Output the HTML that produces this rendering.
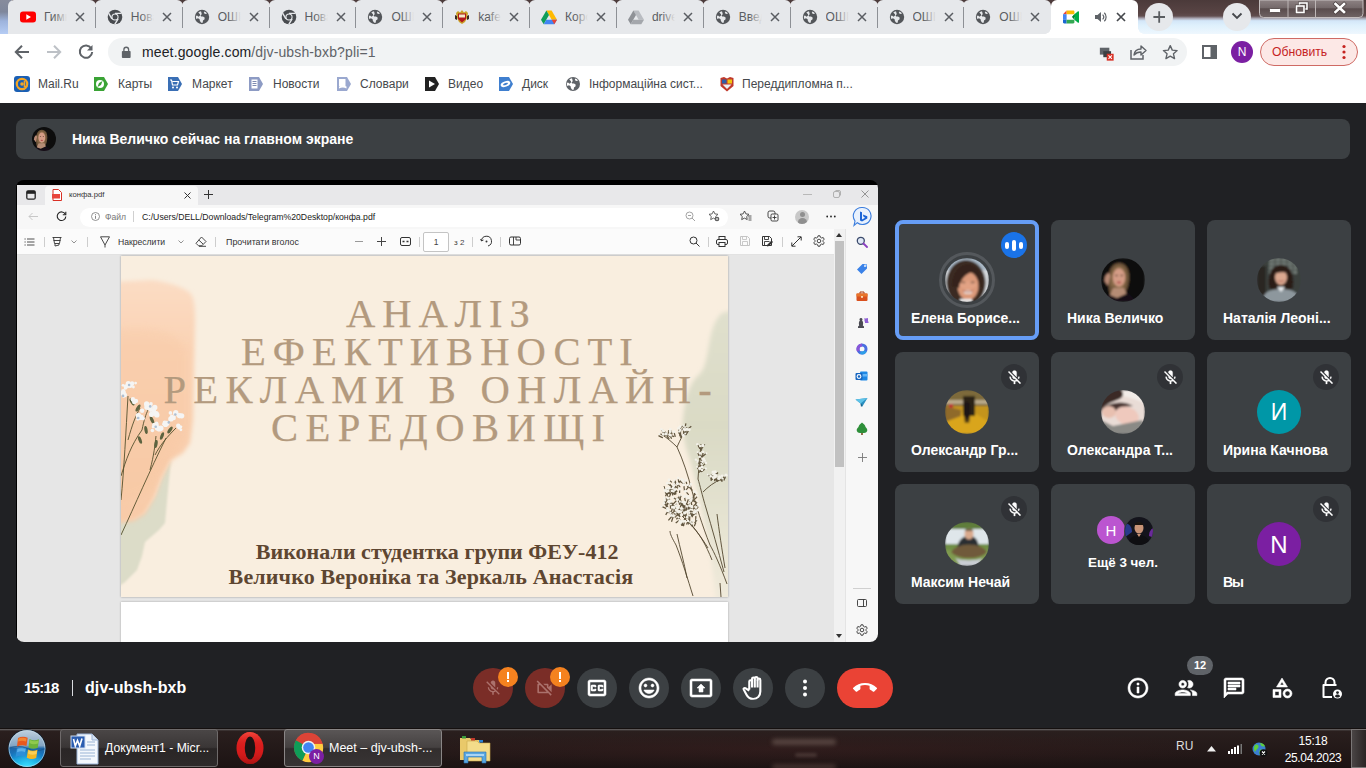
<!DOCTYPE html>
<html><head><meta charset="utf-8">
<style>
*{box-sizing:border-box;margin:0;padding:0}
html,body{width:1366px;height:768px;overflow:hidden;background:#202124;font-family:"Liberation Sans",sans-serif}
.abs,#root div,#root svg,#root span.a{position:absolute}
#root{position:relative;width:1366px;height:768px;overflow:hidden;background:#202124}
/* ---------- chrome tab strip ---------- */
#tabstrip{left:0;top:0;width:1366px;height:34px;background:linear-gradient(180deg,#4b3a3a 0,#584444 38%,#604d4e 47%,#a9a7b3 54%,#d3e6f8 61%,#def0fc 74%,#eef7fe 100%)}
#tabstrip .leftglass{left:0;top:0;width:12px;height:34px;background:linear-gradient(180deg,#878c9c 0,#7f879b 35%,#9db3dc 62%,#b5ccf4 100%)}
.tab{top:0;height:34px;width:88px;background:#e6e8eb;border-radius:6px 6px 0 0}
.tab .sep{left:87px;top:9px;width:1px;height:18px;background:#8d9095}
.tab .fav{left:12px;top:9px;width:16px;height:16px}
.tab .tt{left:36px;top:9px;width:23px;height:16px;overflow:hidden;white-space:nowrap;font-size:12px;line-height:16px;color:#5a5d62}
.tab .tt:after{content:"";position:absolute;right:0;top:0;width:13px;height:16px;background:linear-gradient(90deg,rgba(230,232,235,0),#e6e8eb)}
.tab .x{left:66px;top:11px;width:12px;height:12px}
#toolbar{left:0;top:34px;width:1366px;height:36px;background:#fff}
#omni{left:108px;top:38px;width:1079px;height:28px;border-radius:14px;background:#f1f3f4}
#bm{left:0;top:70px;width:1366px;height:33px;background:#fff}
.bmi{top:76px;width:16px;height:16px}
.bmt{top:76px;font-size:12px;line-height:16px;color:#45484c;white-space:nowrap}
/* ---------- meet ---------- */
#banner{left:16px;top:119px;width:1334px;height:40px;border-radius:8px;background:#3c4043}
#banner .t{left:56px;top:10px;font-size:14px;font-weight:bold;color:#fff;line-height:20px;white-space:nowrap}
.tile{width:144px;height:120px;border-radius:8px;background:#3c4043}
.tile .nm{left:16px;top:88px;font-size:14px;line-height:20px;font-weight:bold;color:#fff;white-space:nowrap}
.tile .av{left:50px;top:38px;width:44px;height:44px;border-radius:50%;overflow:hidden}
.tile .mic{left:106px;top:12px;width:26px;height:26px;border-radius:50%;background:#303236}
.cb{top:668px;width:40px;height:40px;border-radius:50%;background:#3c4043}
.tl{font-family:"Liberation Serif",serif;font-size:40.600px;line-height:46px;color:#b39a7e;white-space:nowrap;-webkit-text-stroke:.25px #b39a7e}
.st{font-family:"Liberation Serif",serif;font-weight:bold;font-size:22px;line-height:26px;color:#5e4631;white-space:nowrap}
/* ---------- taskbar ---------- */
#taskbar{left:0;top:728px;width:1366px;height:40px;background:#1d1413}
</style></head>
<body><div id="root">
<!-- TABSTRIP -->
<div id="tabstrip"><div class="leftglass"></div></div>
<div class="tab" style="left:8.0px"><svg class="fav" viewBox="0 0 16 16"><rect x="0" y="2.5" width="16" height="11" rx="3" fill="#f00"/><path d="M6.3 5.3v5.4L11 8z" fill="#fff"/></svg><div class="tt">Гимн</div><svg class="x" viewBox="0 0 12 12"><path d="M2 2l8 8M10 2l-8 8" stroke="#5a5d62" stroke-width="1.500" fill="none"/></svg></div>
<div class="tab" style="left:94.8px"><svg class="fav" viewBox="0 0 16 16"><circle cx="8" cy="8" r="7.300" fill="#484b4f"/><circle cx="8" cy="8" r="3.600" fill="#e6e8eb"/><circle cx="8" cy="8" r="2.500" fill="#484b4f"/><path d="M8 4.400h6.500M4.900 9.800L1.600 4.200M11.100 9.800L7.800 15.400" stroke="#e6e8eb" stroke-width="1.400" fill="none"/></svg><div class="tt">Нова</div><svg class="x" viewBox="0 0 12 12"><path d="M2 2l8 8M10 2l-8 8" stroke="#5a5d62" stroke-width="1.500" fill="none"/></svg></div>
<div class="tab" style="left:181.7px"><svg class="fav" viewBox="0 0 16 16"><circle cx="8" cy="8" r="7.200" fill="#53565a"/><path d="M7 2.2c-1 .2-2 .7-2.7 1.4L6 5.2v1.3L4.6 7.8 3 6.5 1.9 7c-.1 1 0 2 .4 2.9L4 9.2l1.6 1 .3 1.8 1.3 1.8c.5 0 1 0 1.500-.1L9 11.600l1.600-1.400V8.600L9 7.500H7.200L6.500 6.300l1.300-1zM10.300 2.600l-.5 1.300 1.400 1.100 1.900-.4c-.7-.9-1.700-1.600-2.800-2z" fill="#e6e8eb"/></svg><div class="tt">ОШІБ</div><svg class="x" viewBox="0 0 12 12"><path d="M2 2l8 8M10 2l-8 8" stroke="#5a5d62" stroke-width="1.500" fill="none"/></svg></div>
<div class="tab" style="left:268.5px"><svg class="fav" viewBox="0 0 16 16"><circle cx="8" cy="8" r="7.300" fill="#484b4f"/><circle cx="8" cy="8" r="3.600" fill="#e6e8eb"/><circle cx="8" cy="8" r="2.500" fill="#484b4f"/><path d="M8 4.400h6.500M4.900 9.800L1.600 4.200M11.100 9.800L7.800 15.400" stroke="#e6e8eb" stroke-width="1.400" fill="none"/></svg><div class="tt">Нова</div><svg class="x" viewBox="0 0 12 12"><path d="M2 2l8 8M10 2l-8 8" stroke="#5a5d62" stroke-width="1.500" fill="none"/></svg></div>
<div class="tab" style="left:355.4px"><svg class="fav" viewBox="0 0 16 16"><circle cx="8" cy="8" r="7.200" fill="#53565a"/><path d="M7 2.2c-1 .2-2 .7-2.7 1.4L6 5.2v1.3L4.6 7.8 3 6.5 1.9 7c-.1 1 0 2 .4 2.9L4 9.2l1.6 1 .3 1.8 1.3 1.8c.5 0 1 0 1.500-.1L9 11.600l1.600-1.400V8.600L9 7.500H7.200L6.500 6.300l1.300-1zM10.300 2.600l-.5 1.300 1.400 1.100 1.900-.4c-.7-.9-1.700-1.600-2.800-2z" fill="#e6e8eb"/></svg><div class="tt">ОШІБ</div><svg class="x" viewBox="0 0 12 12"><path d="M2 2l8 8M10 2l-8 8" stroke="#5a5d62" stroke-width="1.500" fill="none"/></svg></div>
<div class="tab" style="left:442.2px"><svg class="fav" viewBox="0 0 16 16"><path d="M2 4l2-2 2 1.500L8 1l2 2.500L12 2l2 2-1 5-2 4-3 2-3-2-2-4z" fill="#c9a227"/><path d="M4 4.500h8v5.500L8 13.500 4 10z" fill="#b3171d"/><path d="M5 5.500h6v3H5z" fill="#f3e9c6"/><path d="M1 6l2 1v4l-2-1zM15 6l-2 1v4l2-1z" fill="#3a2a20"/></svg><div class="tt">kafed</div><svg class="x" viewBox="0 0 12 12"><path d="M2 2l8 8M10 2l-8 8" stroke="#5a5d62" stroke-width="1.500" fill="none"/></svg></div>
<div class="tab" style="left:529.1px"><svg class="fav" viewBox="0 0 16 16"><path d="M5.400 1.500h5.200L16 10.800h-5.300z" fill="#ffba00"/><path d="M5.400 1.500L0 10.800l2.700 4.500L8 6z" fill="#0f9d58"/><path d="M5.300 10.800L2.700 15.300h10.600l2.700-4.500z" fill="#4285f4"/><path d="M8 6l2.700 4.800H5.300z" fill="#188038" opacity=".0"/><path d="M10.700 10.800L13.300 15.300 16 10.800z" fill="#ea4335"/></svg><div class="tt">Коро</div><svg class="x" viewBox="0 0 12 12"><path d="M2 2l8 8M10 2l-8 8" stroke="#5a5d62" stroke-width="1.500" fill="none"/></svg></div>
<div class="tab" style="left:615.9px"><svg class="fav" viewBox="0 0 16 16"><path d="M5.400 1.500h5.200L16 10.800h-5.300z" fill="#b9bcc1"/><path d="M5.400 1.500L0 10.800l2.700 4.500L8 6z" fill="#8f9297"/><path d="M5.300 10.800L2.700 15.300h10.600l2.700-4.500z" fill="#a4a7ac"/></svg><div class="tt">drive</div><svg class="x" viewBox="0 0 12 12"><path d="M2 2l8 8M10 2l-8 8" stroke="#5a5d62" stroke-width="1.500" fill="none"/></svg></div>
<div class="tab" style="left:702.8px"><svg class="fav" viewBox="0 0 16 16"><circle cx="8" cy="8" r="7.200" fill="#53565a"/><path d="M7 2.2c-1 .2-2 .7-2.7 1.4L6 5.2v1.3L4.6 7.8 3 6.5 1.9 7c-.1 1 0 2 .4 2.9L4 9.2l1.6 1 .3 1.8 1.3 1.8c.5 0 1 0 1.500-.1L9 11.600l1.600-1.400V8.600L9 7.500H7.200L6.500 6.300l1.300-1zM10.300 2.600l-.5 1.300 1.400 1.100 1.900-.4c-.7-.9-1.700-1.600-2.800-2z" fill="#e6e8eb"/></svg><div class="tt">Введ</div><svg class="x" viewBox="0 0 12 12"><path d="M2 2l8 8M10 2l-8 8" stroke="#5a5d62" stroke-width="1.500" fill="none"/></svg></div>
<div class="tab" style="left:789.6px"><svg class="fav" viewBox="0 0 16 16"><circle cx="8" cy="8" r="7.200" fill="#53565a"/><path d="M7 2.2c-1 .2-2 .7-2.7 1.4L6 5.2v1.3L4.6 7.8 3 6.5 1.9 7c-.1 1 0 2 .4 2.9L4 9.2l1.6 1 .3 1.8 1.3 1.8c.5 0 1 0 1.500-.1L9 11.600l1.600-1.400V8.600L9 7.500H7.200L6.500 6.300l1.300-1zM10.300 2.600l-.5 1.300 1.400 1.100 1.900-.4c-.7-.9-1.700-1.600-2.800-2z" fill="#e6e8eb"/></svg><div class="tt">ОШІБ</div><svg class="x" viewBox="0 0 12 12"><path d="M2 2l8 8M10 2l-8 8" stroke="#5a5d62" stroke-width="1.500" fill="none"/></svg></div>
<div class="tab" style="left:876.5px"><svg class="fav" viewBox="0 0 16 16"><circle cx="8" cy="8" r="7.200" fill="#53565a"/><path d="M7 2.2c-1 .2-2 .7-2.7 1.4L6 5.2v1.3L4.6 7.8 3 6.5 1.9 7c-.1 1 0 2 .4 2.9L4 9.2l1.6 1 .3 1.8 1.3 1.8c.5 0 1 0 1.500-.1L9 11.600l1.600-1.400V8.600L9 7.500H7.200L6.500 6.300l1.300-1zM10.300 2.600l-.5 1.300 1.400 1.100 1.900-.4c-.7-.9-1.700-1.600-2.800-2z" fill="#e6e8eb"/></svg><div class="tt">ОШІБ</div><svg class="x" viewBox="0 0 12 12"><path d="M2 2l8 8M10 2l-8 8" stroke="#5a5d62" stroke-width="1.500" fill="none"/></svg></div>
<div class="tab" style="left:963.3px"><svg class="fav" viewBox="0 0 16 16"><circle cx="8" cy="8" r="7.200" fill="#53565a"/><path d="M7 2.2c-1 .2-2 .7-2.7 1.4L6 5.2v1.3L4.6 7.8 3 6.5 1.9 7c-.1 1 0 2 .4 2.9L4 9.2l1.6 1 .3 1.8 1.3 1.8c.5 0 1 0 1.500-.1L9 11.600l1.600-1.400V8.600L9 7.500H7.200L6.500 6.300l1.300-1zM10.300 2.600l-.5 1.300 1.400 1.100 1.900-.4c-.7-.9-1.700-1.600-2.800-2z" fill="#e6e8eb"/></svg><div class="tt">ОШІБ</div><svg class="x" viewBox="0 0 12 12"><path d="M2 2l8 8M10 2l-8 8" stroke="#5a5d62" stroke-width="1.500" fill="none"/></svg></div>
<div style="left:94.8px;top:7px;width:1px;height:21px;background:#8d9095"></div>
<div style="left:181.7px;top:7px;width:1px;height:21px;background:#8d9095"></div>
<div style="left:268.5px;top:7px;width:1px;height:21px;background:#8d9095"></div>
<div style="left:355.4px;top:7px;width:1px;height:21px;background:#8d9095"></div>
<div style="left:442.2px;top:7px;width:1px;height:21px;background:#8d9095"></div>
<div style="left:529.1px;top:7px;width:1px;height:21px;background:#8d9095"></div>
<div style="left:615.9px;top:7px;width:1px;height:21px;background:#8d9095"></div>
<div style="left:702.8px;top:7px;width:1px;height:21px;background:#8d9095"></div>
<div style="left:789.6px;top:7px;width:1px;height:21px;background:#8d9095"></div>
<div style="left:876.5px;top:7px;width:1px;height:21px;background:#8d9095"></div>
<div style="left:963.3px;top:7px;width:1px;height:21px;background:#8d9095"></div>
<div class="tab" style="left:1050.500px;background:#fff;width:87px"><svg class="fav" viewBox="0 0 16 16"><path d="M0 5.200L3.600 1.600V5.200z" fill="#ea4335"/><path d="M3.600 1.600h6.600c.7 0 1.200.5 1.200 1.200v2.400H3.600z" fill="#fbbc04"/><path d="M0 5.200h3.600v5.600H0z" fill="#4285f4"/><path d="M0 10.800h3.600v3.600H1.200c-.7 0-1.200-.5-1.200-1.200z" fill="#1967d2"/><path d="M3.600 10.800h7.800v2.400c0 .7-.5 1.200-1.200 1.200H3.600z" fill="#34a853"/><path d="M11.400 5.200L15 2.300c.4-.3 1-.1 1 .5v10.400c0 .6-.6.800-1 .5l-3.600-2.900V8l-2.200 0 0 0z" fill="#00ac47"/><path d="M11.400 5.200v5.600L9 8z" fill="#00832d"/></svg><svg style="left:43px;top:10px;width:14px;height:14px" viewBox="0 0 14 14"><path d="M1 5h2.500L7 2v10L3.500 9H1z" fill="#5f6368"/><path d="M8.600 4.600a3.400 3.400 0 0 1 0 4.800M10.300 2.800a5.800 5.800 0 0 1 0 8.400" stroke="#5f6368" stroke-width="1.200" fill="none"/></svg><svg class="x" style="left:64px" viewBox="0 0 12 12"><path d="M2 2l8 8M10 2l-8 8" stroke="#45484c" stroke-width="1.700" fill="none"/></svg></div>
<div style="left:1045px;top:28px;width:6px;height:6px;background:radial-gradient(circle at 0 0,rgba(255,255,255,0) 5.500px,#fff 6px)"></div><div style="left:1138px;top:28px;width:6px;height:6px;background:radial-gradient(circle at 100% 0,rgba(255,255,255,0) 5.500px,#fff 6px)"></div>
<div style="left:1145px;top:3px;width:28px;height:28px;border-radius:50%;background:#e6e8eb"></div>
<svg style="left:1151px;top:9px;width:16px;height:16px" viewBox="0 0 16 16"><path d="M8.200 2.200v11.600M2.400 8h11.600" stroke="#5a5d61" stroke-width="1.800" fill="none"/></svg>
<div style="left:1223px;top:3px;width:28px;height:28px;border-radius:50%;background:#e6e8eb"></div>
<svg style="left:1231px;top:12px;width:12px;height:8px" viewBox="0 0 12 8"><path d="M1.500 1.500L6 6l4.500-4.500" stroke="#45484c" stroke-width="1.800" fill="none"/></svg>
<svg id="wc" style="left:1259px;top:0;width:105px;height:19px" viewBox="0 0 105 19">
<defs><linearGradient id="wg" x1="0" y1="0" x2="0" y2="1"><stop offset="0" stop-color="#8d8283"/><stop offset=".45" stop-color="#74696a"/><stop offset=".5" stop-color="#594c4d"/><stop offset="1" stop-color="#6f6364"/></linearGradient></defs>
<path d="M.5 0V13.500a4 4 0 0 0 4 4H100a4 4 0 0 0 4-4V0z" fill="url(#wg)" stroke="#c4bebe" stroke-width="1"/>
<path d="M29 0v17.500M56.500 0v17.500" stroke="#bdb6b6" stroke-width="1"/>
<rect x="10.500" y="8.500" width="11" height="4" rx=".8" fill="#fff" stroke="#4a4040" stroke-width=".8"/>
<rect x="40.500" y="3" width="7.500" height="6" fill="none" stroke="#4a4040" stroke-width="2.800"/><rect x="40.500" y="3" width="7.500" height="6" fill="none" stroke="#fff" stroke-width="1.600"/>
<rect x="37.500" y="6" width="7.500" height="6.500" fill="#6b5f60" stroke="#4a4040" stroke-width="2.800"/><rect x="37.500" y="6" width="7.500" height="6.500" fill="#6b5f60" stroke="#fff" stroke-width="1.600"/>
<path d="M76.500 4l8.500 8M85 4l-8.500 8" stroke="#4a4040" stroke-width="4" stroke-linecap="square"/><path d="M76.500 4l8.500 8M85 4l-8.500 8" stroke="#fff" stroke-width="2.600" stroke-linecap="square"/>
</svg>

<!-- TOOLBAR -->
<div id="toolbar"></div>
<svg style="left:13px;top:43px;width:18px;height:18px" viewBox="0 0 18 18"><path d="M16 9H3.500M9 2.800L2.800 9 9 15.200" stroke="#5f6368" stroke-width="2" fill="none"/></svg>
<svg style="left:45px;top:43px;width:18px;height:18px" viewBox="0 0 18 18"><path d="M2 9h12.500M9 2.800L15.200 9 9 15.200" stroke="#bdc1c6" stroke-width="2" fill="none"/></svg>
<svg style="left:77px;top:43px;width:18px;height:18px" viewBox="0 0 18 18"><path d="M14.200 5.200A6.200 6.200 0 1 0 15.200 9" stroke="#5f6368" stroke-width="2" fill="none"/><path d="M15.500 2v5.500H10z" fill="#5f6368"/></svg>
<div id="omni"></div>
<svg style="left:121px;top:45.500px;width:10.500px;height:12.500px" viewBox="0 0 12 14"><rect x="1" y="5.500" width="10" height="8" rx="1" fill="#5f6368"/><path d="M3.300 6V4a2.700 2.700 0 0 1 5.400 0v2" stroke="#5f6368" stroke-width="1.500" fill="none"/></svg>
<div style="left:142px;top:43px;font-size:14px;line-height:18px;color:#202124;white-space:nowrap;letter-spacing:.13px">meet.google.com<span style="color:#5f6368">/djv-ubsh-bxb?pli=1</span></div>
<!-- right icons in omnibox -->
<svg style="left:1099px;top:45.500px;width:15.500px;height:15.500px" viewBox="0 0 18 18"><rect x="1" y="2" width="11" height="8" fill="#5f6368"/><rect x="5" y="6" width="9" height="7" fill="#3c4043"/><rect x="9" y="9" width="8" height="8" fill="#d93025"/><path d="M11 11l4 4M15 11l-4 4" stroke="#fff" stroke-width="1.200"/></svg>
<svg style="left:1129px;top:43px;width:18px;height:18px" viewBox="0 0 18 18"><path d="M2 7v9h12v-4" stroke="#5f6368" stroke-width="1.500" fill="none"/><path d="M5 12c.500-4 3-6 7-6V3l5 4.500-5 4.500V9c-3 0-5 .800-7 3z" stroke="#5f6368" stroke-width="1.400" fill="none" stroke-linejoin="round"/></svg>
<svg style="left:1162px;top:44px;width:16.500px;height:16.500px" viewBox="0 0 18 18"><path d="M9 1.800l2.200 4.900 5.300.5-4 3.500 1.200 5.200L9 13.200l-4.700 2.700 1.200-5.200-4-3.500 5.300-.5z" stroke="#5f6368" stroke-width="1.500" fill="none" stroke-linejoin="round"/></svg>
<svg style="left:1202px;top:45px;width:15px;height:14px" viewBox="0 0 15 14"><rect x="1" y="1" width="13" height="12" stroke="#5f6368" stroke-width="2" fill="none"/><rect x="8.500" y="1" width="5.500" height="12" fill="#5f6368"/></svg>
<div style="left:1231px;top:41px;width:22px;height:22px;border-radius:50%;background:#7b1fa2;color:#fff;font-size:12px;line-height:22px;text-align:center">N</div>
<div style="left:1260px;top:38px;width:98px;height:28px;border-radius:14px;border:1px solid #cf6a64;background:#fce8e6"></div>
<div style="left:1272px;top:44px;font-size:12.2px;line-height:16px;color:#c5221f;white-space:nowrap;letter-spacing:0">Обновить</div>
<svg style="left:1341px;top:44px;width:6px;height:16px" viewBox="0 0 6 16"><circle cx="3" cy="2.500" r="1.600" fill="#c5221f"/><circle cx="3" cy="8" r="1.600" fill="#c5221f"/><circle cx="3" cy="13.500" r="1.600" fill="#c5221f"/></svg>

<!-- BOOKMARKS -->
<div id="bm"></div>
<svg class="bmi" style="left:14px" viewBox="0 0 16 16"><rect width="16" height="16" rx="3" fill="#1a5fb4"/><circle cx="8" cy="8" r="5.200" fill="none" stroke="#f5a623" stroke-width="2.200"/><circle cx="8" cy="8" r="1.800" fill="#f5a623"/><path d="M10.500 5v5.500h3" stroke="#f5a623" stroke-width="1.600" fill="none"/></svg>
<div class="bmt" style="left:38px">Mail.Ru</div>
<svg class="bmi" style="left:93px" viewBox="0 0 16 16"><path d="M1 1h10l4 7-4 7H1z" fill="#3aa335"/><circle cx="7" cy="8" r="4" fill="#fff"/><path d="M9.500 5L8 9 4.500 11 6 7z" fill="#3aa335"/></svg>
<div class="bmt" style="left:118px">Карты</div>
<svg class="bmi" style="left:167px" viewBox="0 0 16 16"><path d="M1 1h10l4 7-4 7H1z" fill="#3a6fb5"/><path d="M3 4h1.500l1 5h5l1-3.500H5.500" stroke="#fff" stroke-width="1.200" fill="none"/><circle cx="6" cy="11.500" r="1" fill="#fff"/><circle cx="10" cy="11.500" r="1" fill="#fff"/></svg>
<div class="bmt" style="left:192px">Маркет</div>
<svg class="bmi" style="left:248px" viewBox="0 0 16 16"><path d="M1 1h10l4 7-4 7H1z" fill="#8d9bc4"/><path d="M3.500 3.500h6v9h-6z" fill="#fff"/><path d="M4.500 5.500h4M4.500 7.500h4M4.500 9.500h4" stroke="#6f7ea8" stroke-width=".9"/></svg>
<div class="bmt" style="left:273px">Новости</div>
<svg class="bmi" style="left:336px" viewBox="0 0 16 16"><path d="M1 1h10l4 7-4 7H1z" fill="#9aa8cf"/><path d="M3 3h6.500v7H3z" fill="#fff"/><path d="M3 10.500c2.500-1.300 5-1.300 7.500 0v2c-2.500-1.300-5-1.300-7.500 0z" fill="#fff"/></svg>
<div class="bmt" style="left:360px">Словари</div>
<svg class="bmi" style="left:424px" viewBox="0 0 16 16"><path d="M1 1h10l4 7-4 7H1z" fill="#222"/><path d="M5 4.500v7L11 8z" fill="#fff"/></svg>
<div class="bmt" style="left:448px">Видео</div>
<svg class="bmi" style="left:498px" viewBox="0 0 16 16"><path d="M1 1h10l4 7-4 7H1z" fill="#3f7fcf"/><ellipse cx="7.500" cy="8" rx="5" ry="2.600" fill="#fff" transform="rotate(-20 7.500 8)"/><ellipse cx="7.500" cy="8" rx="2.600" ry="1" fill="#3f7fcf" transform="rotate(-20 7.500 8)"/></svg>
<div class="bmt" style="left:522px">Диск</div>
<svg class="bmi" style="left:565px" viewBox="0 0 16 16"><circle cx="8" cy="8" r="7" fill="#5f6368"/><path d="M7 2.200c-1 .2-2 .7-2.700 1.400L6 5.200v1.300L4.600 7.800 3 6.500 1.900 7c-.1 1 0 2 .4 2.900L4 9.200l1.600 1 .3 1.800 1.300 1.800c.5 0 1 0 1.500-.1L9 11.600l1.600-1.400V8.600L9 7.500H7.200L6.500 6.300l1.300-1zM10.300 2.600l-.5 1.300 1.400 1.100 1.900-.4c-.7-.9-1.700-1.600-2.800-2z" fill="#fff"/></svg>
<div class="bmt" style="left:589px">Інформаційна сист...</div>
<svg class="bmi" style="left:719px" viewBox="0 0 16 16"><path d="M1.500 2L5 1l3 1.500L11 1l3.500 1v8L8 15.500 1.500 10z" fill="#c0392b"/><path d="M3 3.500h4.500v4H3z" fill="#2e5fa8"/><path d="M8.500 3.500H13v4H8.500z" fill="#f1c40f"/><path d="M3.500 8.500h9L8 13z" fill="#ecf0f1"/></svg>
<div class="bmt" style="left:742px">Переддипломна п...</div>

<!-- MEET -->
<div id="banner"><div class="t">Ника Величко сейчас на главном экране</div>
<svg style="left:16px;top:8px;width:24px;height:24px;border-radius:50%" viewBox="0 0 44 44"><g filter="url(#avb)"><rect width="44" height="44" fill="#0b0a0c"/><path d="M8 32C5 16 10 5 18 5c7 0 11 7 10 17-1 7-2 10-5 14H9z" fill="#6e553a"/><path d="M10 28C9 16 12 8 18 8c5 0 8 6 7 14-1 5-2 8-4 10z" fill="#8a6a48"/><ellipse cx="18" cy="19.500" rx="6.200" ry="9.200" fill="#d49c86"/><path d="M3.500 23c0-5 2.500-8 4.500-8l1.500 3-2.500 10z" fill="#b98a74"/><ellipse cx="15.500" cy="17.500" rx="1.300" ry=".7" fill="#4a3428"/><ellipse cx="20.800" cy="17.500" rx="1.300" ry=".7" fill="#4a3428"/><path d="M12 30h11l6 14H6z" fill="#b58c74"/><path d="M6 36l10 4 11-5 10 9H0z" fill="#121016"/><ellipse cx="18" cy="24.500" rx="2.300" ry="1.100" fill="#b04a48"/></g></svg>
</div>
<div id="pres" style="left:16px;top:180px;width:862px;height:462px;border-radius:8px;background:#000;overflow:hidden">
<div id="pi" style="left:-16px;top:-180px;width:1366px;height:768px">
<!-- edge tab bar -->
<div style="left:17px;top:185px;width:861px;height:20px;background:#e8e8ea"></div>
<div style="left:45px;top:186px;width:153px;height:19px;background:#f7f7f7;border-radius:4px 4px 0 0"></div>
<svg style="left:26px;top:190px;width:10px;height:10px" viewBox="0 0 10 10"><rect x=".8" y=".8" width="8.400" height="8.400" rx="1.500" fill="none" stroke="#222" stroke-width="1.300"/><rect x=".8" y=".8" width="8.400" height="3" fill="#222"/></svg>
<svg style="left:52px;top:189px;width:10px;height:12px" viewBox="0 0 10 12"><path d="M1 .5h5.500L9.500 3.500v8H1z" fill="#fff" stroke="#d93025" stroke-width="1"/><rect x="0" y="5" width="8" height="4.500" fill="#e8453c"/></svg>
<div style="left:69px;top:189px;font-size:7.700px;line-height:11px;color:#333;white-space:nowrap">конфа.pdf</div>
<svg style="left:184px;top:192px;width:7px;height:7px" viewBox="0 0 7 7"><path d="M.5.5l6 6M6.500.5l-6 6" stroke="#333" stroke-width="1"/></svg>
<svg style="left:204px;top:190px;width:9px;height:9px" viewBox="0 0 9 9"><path d="M4.500 0v9M0 4.500h9" stroke="#333" stroke-width="1"/></svg>
<!-- window buttons -->
<div style="left:803px;top:194px;width:9px;height:1px;background:#b8b8b8"></div>
<svg style="left:833px;top:190px;width:8px;height:8px" viewBox="0 0 8 8"><rect x=".5" y="1.500" width="6" height="6" rx="1.500" fill="none" stroke="#aaa" stroke-width=".9"/><path d="M2.500.5H6a1.500 1.500 0 0 1 1.500 1.500V5.500" fill="none" stroke="#aaa" stroke-width=".9"/></svg>
<svg style="left:861px;top:190px;width:8px;height:8px" viewBox="0 0 8 8"><path d="M.5.5l7 7M7.500.5l-7 7" stroke="#8a8a8a" stroke-width=".9"/></svg>
<!-- address row -->
<div style="left:17px;top:205px;width:861px;height:24px;background:#f7f7f7"></div>
<div style="left:80px;top:207.500px;width:648px;height:19px;border-radius:9.500px;background:#fff"></div>
<svg style="left:28px;top:212px;width:10px;height:9px" viewBox="0 0 10 9"><path d="M10 4.500H1M4.500 1L1 4.500 4.500 8" stroke="#c8c8c8" stroke-width="1" fill="none"/></svg>
<svg style="left:56px;top:211px;width:11px;height:11px" viewBox="0 0 11 11"><path d="M9.300 3.200A4.300 4.300 0 1 0 9.800 5.500" stroke="#222" stroke-width="1.100" fill="none"/><path d="M9.800.8v3H6.800" stroke="#222" stroke-width="1.100" fill="none"/></svg>
<svg style="left:91px;top:212px;width:9px;height:9px" viewBox="0 0 9 9"><circle cx="4.500" cy="4.500" r="4" fill="none" stroke="#777" stroke-width=".8"/><path d="M4.500 3.800v3M4.500 2.200v.9" stroke="#777" stroke-width=".9"/></svg>
<div style="left:105px;top:212px;font-size:8.600px;line-height:11px;color:#777;white-space:nowrap">Файл</div>
<div style="left:133px;top:211px;width:1px;height:11px;background:#d0d0d0"></div>
<div style="left:142px;top:212px;font-size:8.700px;line-height:11px;color:#1a1a1a;white-space:nowrap">C:/Users/DELL/Downloads/Telegram%20Desktop/конфа.pdf</div>
<!-- address row right icons -->
<svg style="left:685px;top:211px;width:11px;height:11px" viewBox="0 0 11 11"><circle cx="4.500" cy="4.500" r="3.500" fill="none" stroke="#999" stroke-width=".9"/><path d="M7 7l3 3M3 4.500h3" stroke="#999" stroke-width=".9"/></svg>
<svg style="left:708px;top:210px;width:12px;height:12px" viewBox="0 0 12 12"><path d="M5.500 1l1.400 2.900 3.100.4-2.300 2.200.5 3.100-2.700-1.500-2.800 1.500.6-3.100L1 4.300l3.100-.4z" fill="none" stroke="#555" stroke-width=".9" stroke-linejoin="round"/><circle cx="9" cy="9" r="2.300" fill="#555"/><path d="M9 7.800v2.400M7.800 9h2.400" stroke="#fff" stroke-width=".7"/></svg>
<svg style="left:739px;top:210px;width:13px;height:12px" viewBox="0 0 13 12"><path d="M5.500 1l1.400 2.900 3.100.4-2.300 2.200.5 3.100-2.700-1.500-2.800 1.500.6-3.100L1 4.300l3.100-.4z" fill="none" stroke="#444" stroke-width=".9" stroke-linejoin="round"/><path d="M9 6h3.500M9.500 8h3M9.500 10h3" stroke="#444" stroke-width=".9"/></svg>
<svg style="left:767px;top:210px;width:12px;height:12px" viewBox="0 0 12 12"><rect x="1" y="1" width="7" height="7" rx="1.800" fill="none" stroke="#333" stroke-width=".9"/><rect x="4" y="4" width="7" height="7" rx="1.200" fill="#f7f7f7" stroke="#333" stroke-width=".9"/><path d="M7.500 5.500v4M5.500 7.500h4" stroke="#333" stroke-width=".9"/></svg>
<div style="left:795px;top:209.500px;width:14px;height:14px;border-radius:50%;background:#c8c8c8;overflow:hidden"><div style="left:4.500px;top:2.500px;width:5px;height:5px;border-radius:50%;background:#8f8f8f"></div><div style="left:2.500px;top:8.500px;width:9px;height:8px;border-radius:50%;background:#8f8f8f"></div></div>
<svg style="left:826px;top:215px;width:10px;height:3px" viewBox="0 0 10 3"><circle cx="1.200" cy="1.500" r=".9" fill="#222"/><circle cx="5" cy="1.500" r=".9" fill="#222"/><circle cx="8.800" cy="1.500" r=".9" fill="#222"/></svg>
<svg style="left:852px;top:206px;width:21px;height:22px" viewBox="0 0 21 22"><path d="M10.500 1.500a8.500 8.500 0 1 1-5.200 15.200L2 19.500l1-4.500A8.500 8.500 0 0 1 10.500 1.500z" fill="#e8f1fd" stroke="#3b7ddd" stroke-width="1.100"/><path d="M8 5.500l2 .8v7.200l3.200-1.800-1.500-.8-.9-2.300 4.500 1.700v2.300L10 15.500 8 14.400z" fill="#1a64d6"/></svg>
<!-- pdf toolbar -->
<div style="left:17px;top:229px;width:817px;height:26px;background:#fbfbfb;border-bottom:1px solid #e2e2e2"></div>
<svg style="left:24px;top:238px;width:11px;height:8px" viewBox="0 0 11 8"><path d="M3 1H10.500M3 4H10.500M3 7H10.500M.5 1h1.200M.5 4h1.200M.5 7h1.200" stroke="#3a3a3a" stroke-width=".9"/></svg>
<div style="left:44px;top:237px;width:1px;height:10px;background:#cdcdcd"></div>
<svg style="left:52px;top:236px;width:10px;height:12px" viewBox="0 0 10 12"><path d="M.5 1.500h9M1.500 1.500l1 6h5l1-6M3 7.500v2.500l4-1V7.500" stroke="#333" stroke-width=".9" fill="none"/><path d="M1.500 4.500h7" stroke="#333" stroke-width=".9"/></svg>
<svg style="left:71px;top:240px;width:6px;height:4px" viewBox="0 0 6 4"><path d="M.5.500L3 3 5.500.5" stroke="#777" stroke-width=".8" fill="none"/></svg>
<div style="left:87px;top:237px;width:1px;height:10px;background:#cdcdcd"></div>
<svg style="left:100px;top:236px;width:10px;height:12px" viewBox="0 0 10 12"><path d="M.5.800h9L5 9z" stroke="#333" stroke-width=".9" fill="none" stroke-linejoin="round"/><path d="M5 9v2.500" stroke="#333" stroke-width=".9"/></svg>
<div style="left:118px;top:237px;font-size:8.600px;line-height:11px;color:#333;white-space:nowrap">Накреслити</div>
<svg style="left:178px;top:240px;width:6px;height:4px" viewBox="0 0 6 4"><path d="M.5.500L3 3 5.500.5" stroke="#777" stroke-width=".8" fill="none"/></svg>
<svg style="left:195px;top:236px;width:12px;height:11px" viewBox="0 0 12 11"><path d="M6.500 1L11 5.500 6.800 9.800H3.500L1 7.300z" stroke="#333" stroke-width=".9" fill="none" stroke-linejoin="round"/><path d="M3.800 4L8 8M4 10.300h7" stroke="#333" stroke-width=".9"/></svg>
<div style="left:215px;top:237px;width:1px;height:10px;background:#cdcdcd"></div>
<div style="left:226px;top:237px;font-size:8.900px;line-height:11px;color:#333;white-space:nowrap">Прочитати вголос</div>
<div style="left:355px;top:241px;width:8px;height:1px;background:#999"></div>
<svg style="left:377px;top:237px;width:9px;height:9px" viewBox="0 0 9 9"><path d="M4.500 0v9M0 4.500h9" stroke="#444" stroke-width="1"/></svg>
<svg style="left:400px;top:237px;width:11px;height:9px" viewBox="0 0 11 9"><rect x=".5" y=".5" width="10" height="8" rx="1.500" fill="none" stroke="#333" stroke-width="1"/><path d="M2.500 4.500h2M8.500 4.500h-2" stroke="#333" stroke-width="1.400"/></svg>
<div style="left:419px;top:237px;width:1px;height:10px;background:#cdcdcd"></div>
<div style="left:423px;top:232px;width:26px;height:20px;border:1px solid #c4c4c4;border-radius:2px;background:#fff;font-size:8.500px;line-height:18px;text-align:center;color:#444">1</div>
<div style="left:454px;top:237px;font-size:8px;line-height:11px;color:#444;white-space:nowrap">з 2</div>
<div style="left:472px;top:237px;width:1px;height:10px;background:#cdcdcd"></div>
<svg style="left:480px;top:235px;width:13px;height:13px" viewBox="0 0 13 13"><path d="M1.500 6A5 5 0 1 1 8 11" stroke="#333" stroke-width="1" fill="none"/><path d="M1.500 6l-1-2M1.500 6l2-1" stroke="#333" stroke-width=".9"/><circle cx="6.500" cy="6.500" r="1" fill="#333"/></svg>
<div style="left:500px;top:237px;width:1px;height:10px;background:#cdcdcd"></div>
<svg style="left:509px;top:236px;width:12px;height:10px" viewBox="0 0 12 10"><rect x=".5" y="1" width="11" height="8" rx="1.500" fill="none" stroke="#333" stroke-width="1"/><path d="M4.500 1v8M7 1v3h4.500" stroke="#333" stroke-width=".9" fill="none"/></svg>
<!-- pdf toolbar right -->
<svg style="left:689px;top:236px;width:11px;height:11px" viewBox="0 0 11 11"><circle cx="4.500" cy="4.500" r="3.500" fill="none" stroke="#333" stroke-width="1"/><path d="M7 7l3.500 3.500" stroke="#333" stroke-width="1"/></svg>
<div style="left:708px;top:237px;width:1px;height:10px;background:#cdcdcd"></div>
<svg style="left:716px;top:236px;width:12px;height:11px" viewBox="0 0 12 11"><rect x=".5" y="3.500" width="11" height="5" rx="1.500" fill="none" stroke="#333" stroke-width="1"/><rect x="3" y=".5" width="6" height="3" fill="#fbfbfb" stroke="#333" stroke-width="1"/><rect x="3" y="6.500" width="6" height="4" fill="#fbfbfb" stroke="#333" stroke-width="1"/></svg>
<svg style="left:740px;top:236px;width:10px;height:10px" viewBox="0 0 10 10"><path d="M.5.500h7l2 2v7h-9z" fill="none" stroke="#c4c4c4" stroke-width="1"/><path d="M2.500.5v3h4V.5M2.500 9.500v-4h5v4" fill="none" stroke="#c4c4c4" stroke-width=".9"/></svg>
<svg style="left:762px;top:236px;width:11px;height:11px" viewBox="0 0 11 11"><path d="M.5.500h7l2 2v7h-9z" fill="none" stroke="#333" stroke-width="1"/><path d="M2.500.5v3h4V.5M2.500 9.500v-4h5" fill="none" stroke="#333" stroke-width=".9"/><path d="M5 10.500l.5-2 4-4 1.500 1.500-4 4z" fill="#333"/></svg>
<div style="left:782px;top:237px;width:1px;height:10px;background:#cdcdcd"></div>
<svg style="left:791px;top:236px;width:11px;height:11px" viewBox="0 0 11 11"><path d="M1 10L10 1M6.500.8H10.200V4.500M4.500 10.200H.8V6.500" stroke="#333" stroke-width="1" fill="none"/></svg>
<svg style="left:813px;top:235px;width:12px;height:12px" viewBox="0 0 12 12"><circle cx="6" cy="6" r="1.800" fill="none" stroke="#333" stroke-width=".9"/><path d="M5 .8h2l.4 1.500 1.300.7 1.500-.5 1 1.700-1.100 1.100v1.400l1.100 1.100-1 1.700-1.500-.5-1.300.7L7 11.200H5l-.4-1.500-1.300-.7-1.500.5-1-1.700 1.100-1.100V5.300L.8 4.200l1-1.700 1.500.5 1.300-.7z" fill="none" stroke="#333" stroke-width=".9" stroke-linejoin="round"/></svg>
<!-- viewer bg -->
<div style="left:17px;top:255px;width:817px;height:387px;background:#e6e6e6"></div>
<!-- scrollbar -->
<div style="left:834px;top:229px;width:11px;height:413px;background:#f1f1f1"></div>
<div style="left:835px;top:241px;width:9px;height:226px;background:#c1c1c1"></div>
<svg style="left:836px;top:233px;width:6px;height:4px" viewBox="0 0 6 4"><path d="M0 4L3 0l3 4z" fill="#333"/></svg>
<svg style="left:836px;top:634px;width:6px;height:4px" viewBox="0 0 6 4"><path d="M0 0l3 4 3-4z" fill="#333"/></svg>
<!-- sidebar -->
<div style="left:845px;top:229px;width:33px;height:413px;background:#f7f7f7;border-left:1px solid #e4e4e4"></div>
<!--SIDEBAR_ICONS--><svg style="left:856px;top:236px;width:12px;height:12px" viewBox="0 0 12 12"><circle cx="4.800" cy="4.800" r="3.500" fill="#dfe8f5" stroke="#3b4a6b" stroke-width="1.300"/><path d="M7.500 7.500l3.500 3.500" stroke="#8a3fc0" stroke-width="1.800" stroke-linecap="round"/></svg>
<svg style="left:856px;top:263px;width:12px;height:12px" viewBox="0 0 12 12"><path d="M6.500 1H11v4.500L5.500 11 1 6.500z" fill="#3b82e8"/><path d="M8 1h3v3z" fill="#7ab0f5"/><circle cx="9" cy="3" r=".9" fill="#fff"/></svg>
<svg style="left:856px;top:290px;width:12px;height:12px" viewBox="0 0 12 12"><rect x=".5" y="3.500" width="11" height="7.500" rx="1" fill="#d9501e"/><rect x=".5" y="3.500" width="11" height="3" fill="#e8742a"/><path d="M4 3.500V2h4v1.500" stroke="#a83a12" stroke-width="1" fill="none"/><rect x="5" y="6" width="2" height="1.800" fill="#fbd9b0"/></svg>
<svg style="left:856px;top:317px;width:13px;height:12px" viewBox="0 0 13 12"><path d="M2 11h6v-1.500L6.800 8.500C7.500 6 7 4.500 6 3.500 7 3 6.500 1 5 1S3 3 4 3.500C3 4.500 2.500 6 3.200 8.500L2 9.500z" fill="#4a4a52"/><path d="M9 6h3.500V4.800L12 4.200V1h-.8v.8h-.6V1h-.8v.8H9.200V1H8.500v3.200L9 4.800z" fill="#8f5fd6"/></svg>
<svg style="left:856px;top:343px;width:12px;height:12px" viewBox="0 0 12 12"><circle cx="6" cy="6" r="4" fill="none" stroke="#4a6fe0" stroke-width="3"/><path d="M6 2a4 4 0 0 0-3.500 6" fill="none" stroke="#8a55d8" stroke-width="3"/><path d="M9.500 8a4 4 0 0 1-5 1.500" fill="none" stroke="#2e9fe8" stroke-width="3"/><circle cx="6" cy="6" r="1.800" fill="#f7f7f7"/></svg>
<svg style="left:855px;top:370px;width:13px;height:12px" viewBox="0 0 13 12"><rect x="5" y="1.500" width="7.500" height="9" rx="1" fill="#1e88e5"/><path d="M5 4h7.500v2.500H5z" fill="#64b5f6"/><rect x=".5" y="3" width="7" height="7" rx="1" fill="#1565c0"/><circle cx="4" cy="6.500" r="1.900" fill="none" stroke="#fff" stroke-width="1.100"/></svg>
<svg style="left:855px;top:397px;width:13px;height:11px" viewBox="0 0 13 11"><path d="M.5 2.500L12.500 1 7 10 5.500 6.500z" fill="#2a8fc0"/><path d="M.5 2.500L12.500 1 5.500 6.500z" fill="#5fc3e8"/><path d="M5.500 6.500L6 10l1.500-2z" fill="#1b5f84"/></svg>
<svg style="left:856px;top:422px;width:12px;height:13px" viewBox="0 0 12 13"><path d="M6 .5C8 2 9.500 3.500 9.500 5c1 .8 1.800 2 1.800 3.200 0 1.600-1.500 2.800-3.300 2.800H4C2.200 11 .7 9.800.7 8.200.7 7 1.500 5.800 2.500 5 2.500 3.500 4 2 6 .5z" fill="#2e8f3a"/><rect x="5.200" y="11" width="1.600" height="2" fill="#7a4a20"/></svg>
<svg style="left:858px;top:453px;width:9px;height:9px" viewBox="0 0 9 9"><path d="M4.500 0v9M0 4.500h9" stroke="#777" stroke-width=".9"/></svg>
<div style="left:853px;top:588px;width:18px;height:1px;background:#d0d0d0"></div>
<svg style="left:857px;top:599px;width:10px;height:8px" viewBox="0 0 10 8"><rect x=".5" y=".5" width="9" height="7" rx="1" fill="none" stroke="#333" stroke-width=".9"/><path d="M6.500.5v7" stroke="#333" stroke-width=".9"/></svg>
<svg style="left:856px;top:624px;width:12px;height:12px" viewBox="0 0 12 12"><circle cx="6" cy="6" r="1.800" fill="none" stroke="#333" stroke-width=".9"/><path d="M5 .8h2l.4 1.500 1.300.7 1.500-.5 1 1.700-1.100 1.100v1.400l1.100 1.100-1 1.700-1.500-.5-1.300.7L7 11.200H5l-.4-1.500-1.300-.7-1.500.5-1-1.700 1.100-1.100V5.300L.8 4.200l1-1.700 1.500.5 1.300-.7z" fill="none" stroke="#333" stroke-width=".9" stroke-linejoin="round"/></svg>
<!--/SIDEBAR_ICONS-->
<!--SLIDE--><!-- page 1 -->
<div id="pg" style="left:121px;top:256px;width:607px;height:341px;background:#f9eedf;overflow:hidden;box-shadow:0 0 2px rgba(0,0,0,.35)">
<svg style="left:0;top:0;width:607px;height:341px" viewBox="121 256 607 341">
<defs>
<filter id="b3" x="-20%" y="-20%" width="140%" height="140%"><feGaussianBlur stdDeviation="2"/></filter>
<filter id="b5" x="-20%" y="-20%" width="140%" height="140%"><feGaussianBlur stdDeviation="3.500"/></filter>
<filter id="b2" x="-20%" y="-20%" width="140%" height="140%"><feGaussianBlur stdDeviation="1.300"/></filter>
<filter id="b1" x="-20%" y="-20%" width="140%" height="140%"><feGaussianBlur stdDeviation=".5"/></filter>
<linearGradient id="pg1" x1="0" y1="0" x2="0" y2="1"><stop offset="0" stop-color="#fbdcc4"/><stop offset=".3" stop-color="#fad2b3"/><stop offset="1" stop-color="#f8cba8"/></linearGradient>
<linearGradient id="rg1" x1="0" y1="0" x2="0" y2="1"><stop offset="0" stop-color="#e0e0cd"/><stop offset=".4" stop-color="#dadac5"/><stop offset=".62" stop-color="#e1e0cd"/><stop offset="1" stop-color="#f0eadb"/></linearGradient>
</defs>
<path d="M171 460L168 490 165 523 159 530 145 542 142 556 137 570 125 582 114 590 114 520 134 519 145 512 155 496 162 477z" fill="#dcdcc8" filter="url(#b2)"/>
<path d="M114 282L150 280C165 281 180 286 189 292 194 296 195 305 195 320L193 420 190 443 183 453 171 460 162 478 155 497 145 514 134 521 114 524z" fill="url(#pg1)" filter="url(#b3)"/>
<path d="M114 330C150 326 178 330 186 350L186 430C180 450 165 470 148 492L114 505z" fill="#f7c39c" opacity=".25" filter="url(#b5)"/>
<path d="M734 310L722 313C716 318 712 328 710 339 708 350 707 358 704 367 701 374 697 376 694 380 690 386 688 392 686 399 684 410 682 420 683 430 684 440 686 450 689 457 693 470 696 483 699 496 703 515 706 530 709 545 712 565 714 580 716 600L734 600z" fill="url(#rg1)" filter="url(#b3)"/>
<g filter="url(#b1)"><path d="M121 535C135 505 150 470 166 438M121 476C126 460 131 445 142 430M121 500C124 470 126 430 128 396M150 470C154 455 155 445 156 436M155 455C160 445 168 436 176 428M142 430C144 420 146 414 148 410M128 440C132 425 136 415 140 408" stroke="#55502e" stroke-width=".9" fill="none"/><g fill="#5d6440"><ellipse cx="138" cy="408" rx="1.600" ry="4" transform="rotate(30 138 408)"/><ellipse cx="152" cy="420" rx="1.600" ry="4" transform="rotate(-25 152 420)"/><ellipse cx="162" cy="436" rx="1.600" ry="4" transform="rotate(20 162 436)"/><ellipse cx="146" cy="430" rx="1.600" ry="4" transform="rotate(-10 146 430)"/><ellipse cx="170" cy="430" rx="1.600" ry="4" transform="rotate(35 170 430)"/><ellipse cx="132" cy="402" rx="1.600" ry="4" transform="rotate(-30 132 402)"/><ellipse cx="156" cy="444" rx="1.600" ry="4" transform="rotate(10 156 444)"/><ellipse cx="140" cy="440" rx="1.600" ry="4" transform="rotate(-20 140 440)"/></g><g fill="#f5f5f4"><circle cx="131.5" cy="384.6" r="1.8"/><circle cx="133.4" cy="387.0" r="1.4"/><circle cx="123.1" cy="385.3" r="1.4"/><circle cx="128.3" cy="383.7" r="2.6"/><circle cx="135.6" cy="383.1" r="1.4"/><circle cx="126.0" cy="386.5" r="2.2"/><circle cx="130.5" cy="386.2" r="1.8"/><circle cx="125.5" cy="388.0" r="1.8"/><circle cx="130.8" cy="384.8" r="1.4"/><circle cx="128.7" cy="386.3" r="1.8"/><circle cx="132.1" cy="383.4" r="2.2"/><circle cx="124.9" cy="395.1" r="2.2"/><circle cx="123.6" cy="393.8" r="2.6"/><circle cx="122.3" cy="392.5" r="1.8"/><circle cx="123.7" cy="396.1" r="1.8"/><circle cx="123.3" cy="391.3" r="2.2"/><circle cx="122.9" cy="393.4" r="1.8"/><circle cx="147.3" cy="407.9" r="1.4"/><circle cx="150.7" cy="410.2" r="1.8"/><circle cx="142.1" cy="410.7" r="2.2"/><circle cx="147.6" cy="404.6" r="1.8"/><circle cx="153.6" cy="410.2" r="2.2"/><circle cx="148.8" cy="409.1" r="1.4"/><circle cx="154.8" cy="407.4" r="2.6"/><circle cx="146.6" cy="404.4" r="2.2"/><circle cx="146.9" cy="407.2" r="2.6"/><circle cx="149.9" cy="407.0" r="2.6"/><circle cx="146.6" cy="403.9" r="2.6"/><circle cx="151.0" cy="403.9" r="1.8"/><circle cx="138.3" cy="415.6" r="2.6"/><circle cx="138.6" cy="418.5" r="1.4"/><circle cx="141.1" cy="417.4" r="2.6"/><circle cx="139.1" cy="415.4" r="2.2"/><circle cx="141.7" cy="416.4" r="1.4"/><circle cx="138.2" cy="416.8" r="1.8"/><circle cx="141.5" cy="417.1" r="1.4"/><circle cx="137.8" cy="419.3" r="1.4"/><circle cx="143.2" cy="418.5" r="1.8"/><circle cx="156.6" cy="423.4" r="1.8"/><circle cx="157.3" cy="427.9" r="2.6"/><circle cx="153.1" cy="427.1" r="1.4"/><circle cx="154.3" cy="424.9" r="2.2"/><circle cx="152.4" cy="430.5" r="1.8"/><circle cx="159.3" cy="427.9" r="1.4"/><circle cx="157.4" cy="425.0" r="1.4"/><circle cx="158.0" cy="429.9" r="1.4"/><circle cx="160.9" cy="428.2" r="2.6"/><circle cx="154.7" cy="425.6" r="2.2"/><circle cx="159.6" cy="428.9" r="2.6"/><circle cx="177.9" cy="414.9" r="1.8"/><circle cx="181.7" cy="415.8" r="2.6"/><circle cx="174.2" cy="416.7" r="1.4"/><circle cx="175.8" cy="412.7" r="2.6"/><circle cx="170.4" cy="412.9" r="1.8"/><circle cx="170.9" cy="418.9" r="2.6"/><circle cx="171.7" cy="416.3" r="1.8"/><circle cx="174.7" cy="413.4" r="1.8"/><circle cx="173.7" cy="418.1" r="2.2"/><circle cx="179.4" cy="415.6" r="2.6"/><circle cx="179.8" cy="416.1" r="2.2"/><circle cx="170.7" cy="418.9" r="2.2"/><circle cx="163.5" cy="424.2" r="1.4"/><circle cx="164.8" cy="422.7" r="2.2"/><circle cx="166.2" cy="423.8" r="2.2"/><circle cx="166.2" cy="423.4" r="2.2"/><circle cx="165.9" cy="424.0" r="1.4"/><circle cx="166.1" cy="424.3" r="2.2"/><circle cx="166.0" cy="424.4" r="1.8"/><circle cx="166.7" cy="423.4" r="2.6"/><circle cx="165.5" cy="424.5" r="2.6"/><circle cx="180.2" cy="427.5" r="1.4"/><circle cx="178.2" cy="425.8" r="2.2"/><circle cx="180.9" cy="429.8" r="1.4"/><circle cx="179.9" cy="426.8" r="1.4"/><circle cx="179.0" cy="427.8" r="1.8"/><circle cx="180.9" cy="426.8" r="1.4"/><circle cx="151.5" cy="414.3" r="2.6"/><circle cx="156.0" cy="414.6" r="1.4"/><circle cx="156.9" cy="414.9" r="2.6"/><circle cx="153.9" cy="411.5" r="2.2"/><circle cx="151.5" cy="415.6" r="1.4"/><circle cx="156.8" cy="415.1" r="1.4"/><circle cx="156.2" cy="414.0" r="2.2"/><circle cx="156.2" cy="413.7" r="2.6"/><circle cx="132.4" cy="400.2" r="1.4"/><circle cx="136.4" cy="401.1" r="1.8"/><circle cx="134.2" cy="402.0" r="2.2"/><circle cx="134.3" cy="401.8" r="1.8"/><circle cx="135.7" cy="400.9" r="2.2"/><circle cx="132.9" cy="399.2" r="2.2"/></g><g fill="#aebfd2"><circle cx="129.1" cy="385.0" r="1.3"/><circle cx="123.0" cy="395.9" r="1.3"/><circle cx="150.2" cy="406.4" r="1.3"/><circle cx="138.2" cy="418.0" r="1.3"/><circle cx="155.7" cy="426.8" r="1.3"/><circle cx="175.3" cy="414.5" r="1.3"/><circle cx="168.8" cy="422.4" r="1.3"/></g></g>
<g filter="url(#b1)"><path d="M727 584C720 565 714 552 710 545 702 525 696 505 692 491 688 475 683 460 677 447M677 447C672 442 666 437 661 434M677 447C680 440 684 433 687 427M724 572C718 550 712 528 706 508 702 495 700 485 698 479 699 465 700 455 701 444M703 492C708 487 714 482 722 479M725 568C722 550 719 530 717 514M693 596C688 580 682 560 676 545 672 538 670 534 670 531M687 578C684 562 680 548 677 534M712 560C706 545 700 535 694 528 688 520 684 510 680 498M708 548C700 535 692 525 684 518 676 510 668 500 664 486M721 597C721 592 720 588 720 583" stroke="#52462f" stroke-width=".9" fill="none"/><path d="M667.6 437.4L666.2 434.2M664.3 435.5L659.6 433.9M674.1 436.6L670.7 435.4M662.5 437.7L658.8 436.0M663.6 433.2L661.3 429.2M670.7 435.9L670.2 431.7M670.7 437.1L666.0 433.3M671.6 438.8L669.7 434.7M667.1 435.7L663.3 434.4M666.8 433.6L662.7 430.3M664.8 436.6L663.6 431.2M669.2 439.0L665.8 433.9M668.4 433.9L668.6 430.2M662.9 437.7L658.5 435.6M675.3 436.8L674.0 431.8M672.2 434.4L670.3 429.5M680.0 431.1L685.0 427.0M679.0 433.8L678.7 428.2M680.0 428.2L683.2 425.5M679.9 436.2L679.4 431.4M683.8 434.8L683.5 429.0M684.7 435.2L686.8 429.3M685.9 435.0L689.1 429.6M685.0 427.9L685.9 423.4M680.0 437.4L683.3 435.4M684.1 435.6L684.8 430.7M680.8 431.4L680.2 426.7M680.4 436.3L685.2 433.4M679.1 432.5L681.3 429.8M686.6 429.9L691.3 426.3M680.5 435.4L680.5 430.0M684.2 433.6L684.7 429.8M699.6 463.1L697.1 460.8M701.5 465.7L697.5 461.8M699.1 455.9L697.6 452.2M699.3 464.2L703.2 459.6M698.0 462.4L695.9 459.8M699.2 466.9L701.3 464.1M702.9 462.3L703.3 458.8M699.5 459.3L700.2 453.4M701.6 449.9L700.2 446.1M701.3 472.2L702.0 466.9M699.3 466.6L702.8 461.8M701.6 448.5L704.8 444.3M700.3 471.4L699.7 468.4M701.6 461.5L699.8 456.7M701.9 457.1L706.4 453.2M701.7 457.3L700.2 454.0M700.4 466.8L702.1 461.4M701.1 450.7L702.9 445.6M702.1 466.6L706.0 462.9M700.0 448.9L697.4 444.2M698.7 472.4L702.0 469.9M697.6 469.0L699.2 465.9M700.8 464.5L704.7 460.7M701.7 471.6L705.7 468.6M698.7 469.6L697.0 467.0M702.4 457.7L703.1 451.9M711.2 480.5L712.8 477.3M718.0 481.2L715.3 477.2M717.7 481.6L713.6 477.6M714.7 481.2L714.8 475.4M711.3 480.8L710.7 476.3M716.9 478.9L716.1 475.5M725.1 479.1L722.2 475.8M717.1 476.1L715.1 471.9M711.3 477.8L707.9 474.7M718.0 481.1L719.6 476.9M711.5 477.7L714.0 474.1M713.7 477.2L713.1 472.1M712.4 479.9L711.4 474.1M715.6 475.4L718.0 472.5M710.8 477.6L712.4 474.6M721.8 480.8L718.9 478.5M723.9 480.5L726.0 475.2M721.8 481.8L722.4 478.4M692.4 490.5L687.2 484.9M670.5 514.2L676.3 510.0M685.9 517.3L685.4 512.1M683.2 516.7L684.6 513.0M669.4 500.1L664.5 498.2M671.3 493.9L664.5 490.3M684.0 483.9L679.8 481.3M694.5 509.8L691.9 506.2M665.7 514.9L668.3 510.7M689.6 522.0L689.8 515.4M683.5 507.8L685.0 502.5M694.8 514.4L696.0 507.4M693.6 515.2L687.2 511.8M670.5 508.7L670.4 501.2M679.3 512.9L679.0 508.0M685.3 510.6L681.1 508.6M676.4 516.2L678.6 511.7M672.8 505.0L671.0 501.4M680.0 507.7L682.3 502.1M684.3 519.1L687.5 516.2M684.7 491.9L683.7 484.8M670.5 514.7L672.7 507.3M671.5 521.8L673.5 515.7M671.7 512.3L667.8 510.4M693.2 513.1L690.4 509.6M693.4 515.2L697.6 510.2M678.3 515.6L675.2 510.9M686.2 517.3L681.6 511.2M692.4 502.2L687.5 496.3M676.3 517.2L671.2 515.4M668.1 507.5L663.9 503.3M688.7 505.4L684.0 502.5M682.5 505.9L679.9 501.8M669.4 496.8L672.0 490.9M676.6 484.8L674.7 480.0M686.5 504.2L688.8 498.2M695.0 510.5L699.2 505.7M678.4 485.3L673.7 481.7M664.5 504.4L668.1 498.3M666.1 494.5L667.9 488.2M680.4 508.9L676.1 505.7M692.3 517.3L692.3 511.0M670.2 492.1L669.6 488.2M684.3 486.8L683.6 480.9M677.6 500.2L679.5 495.7M687.8 510.1L689.5 505.7M678.9 483.3L678.2 478.0M666.1 507.4L668.9 501.7M677.0 500.2L673.2 497.2M679.6 492.9L679.7 488.9M688.2 509.2L689.8 502.8M675.9 494.4L675.3 488.7M674.3 506.6L677.4 503.1M696.3 502.1L691.0 500.0M687.1 485.4L685.9 480.6M684.1 525.7L679.9 521.3M687.7 517.4L691.1 514.5M685.2 490.8L689.6 485.8M681.9 525.7L681.2 521.8M691.9 505.3L690.7 500.4M686.3 515.0L682.7 508.8M694.7 505.2L697.3 501.6M692.8 496.7L696.3 493.0M672.6 514.9L677.7 511.4M672.9 516.1L670.5 512.7M692.5 517.0L688.2 510.8M680.0 516.3L679.6 511.7M668.4 520.4L673.0 515.0M668.9 489.6L673.4 485.6M679.3 500.2L681.4 494.9M680.2 487.3L677.9 484.0M685.4 501.5L684.4 496.4M675.7 523.1L679.6 520.1M674.8 495.0L674.8 489.5M683.4 512.7L678.2 507.4M672.0 505.2L677.4 499.6M674.0 507.5L670.9 504.6M677.2 510.6L674.0 506.8M665.5 496.2L667.7 491.2M669.5 513.2L667.4 508.4M688.3 509.4L691.7 506.7M666.5 504.6L669.5 500.9M678.9 515.9L677.0 510.6M695.0 499.2L697.5 496.1M694.0 508.7L697.9 504.5M679.8 504.8L677.1 497.8M687.2 486.9L691.0 483.9M685.2 510.5L684.6 503.9M693.5 498.3L694.8 491.5M667.8 509.3L661.5 506.4M681.8 526.0L682.7 521.0M685.9 512.9L687.0 506.4M683.4 508.8L683.0 502.6M673.9 511.7L674.2 507.8M676.3 519.2L681.3 515.1M688.7 494.9L685.5 491.2M693.8 500.5L691.7 497.1M666.0 505.2L664.6 500.5M671.9 486.6L669.2 483.6M674.2 517.1L675.5 512.6M684.3 486.9L683.7 482.2M689.3 502.7L691.9 498.7M682.6 523.9L678.5 517.5M672.6 505.3L668.9 501.2M671.6 486.5L667.3 483.2M683.9 526.1L680.6 523.6M689.9 510.1L694.9 504.7M678.2 483.2L681.9 479.6M686.5 524.6L688.1 520.9M674.6 493.4L672.6 488.6M672.2 490.4L668.9 488.0M674.7 489.2L674.8 485.6M667.5 495.7L666.7 491.5M677.2 491.7L673.1 487.7M673.7 494.5L673.5 491.4M665.9 493.8L665.1 490.8M674.0 490.4L673.8 486.7M671.9 482.4L669.0 479.9M678.1 488.3L673.8 485.4M670.3 493.8L665.2 492.6M677.5 486.8L677.5 483.7M672.6 495.5L672.6 489.6M669.0 492.6L666.0 489.3M675.1 488.5L674.0 483.4M693.1 513.7L694.8 510.1M688.0 524.4L690.1 521.9M692.3 526.6L691.8 523.4M695.8 521.3L695.8 515.3M695.9 514.7L695.6 511.4M694.6 523.2L697.1 519.6M690.5 525.1L692.8 520.6M689.9 512.6L691.6 509.7M692.3 516.4L693.9 512.5M689.7 516.4L689.2 512.7M694.3 526.2L695.8 522.5M683.7 524.8L684.7 521.3M692.3 514.0L695.2 512.3M682.9 521.1L687.0 517.2" stroke="#62563f" stroke-width="1.250" fill="none"/><g fill="#f4f2ea"><circle cx="666.2" cy="434.2" r="1.4"/><circle cx="659.6" cy="433.9" r="1.0"/><circle cx="670.7" cy="435.4" r="1.2"/><circle cx="661.3" cy="429.2" r="1.2"/><circle cx="670.2" cy="431.7" r="1.4"/><circle cx="666.0" cy="433.3" r="1.0"/><circle cx="669.7" cy="434.7" r="1.4"/><circle cx="663.3" cy="434.4" r="1.4"/><circle cx="662.7" cy="430.3" r="1.0"/><circle cx="663.6" cy="431.2" r="1.4"/><circle cx="665.8" cy="433.9" r="1.2"/><circle cx="674.0" cy="431.8" r="1.4"/><circle cx="670.3" cy="429.5" r="1.4"/><circle cx="685.0" cy="427.0" r="1.0"/><circle cx="678.7" cy="428.2" r="1.6"/><circle cx="683.2" cy="425.5" r="1.0"/><circle cx="679.4" cy="431.4" r="1.2"/><circle cx="683.5" cy="429.0" r="1.0"/><circle cx="686.8" cy="429.3" r="1.6"/><circle cx="689.1" cy="429.6" r="1.6"/><circle cx="683.3" cy="435.4" r="1.6"/><circle cx="680.2" cy="426.7" r="1.4"/><circle cx="685.2" cy="433.4" r="1.0"/><circle cx="680.5" cy="430.0" r="1.2"/><circle cx="684.7" cy="429.8" r="1.6"/><circle cx="697.1" cy="460.8" r="1.0"/><circle cx="697.5" cy="461.8" r="1.2"/><circle cx="697.6" cy="452.2" r="1.0"/><circle cx="703.2" cy="459.6" r="1.4"/><circle cx="695.9" cy="459.8" r="1.2"/><circle cx="701.3" cy="464.1" r="1.0"/><circle cx="703.3" cy="458.8" r="1.6"/><circle cx="700.2" cy="453.4" r="1.4"/><circle cx="700.2" cy="446.1" r="1.2"/><circle cx="702.0" cy="466.9" r="1.4"/><circle cx="702.8" cy="461.8" r="1.2"/><circle cx="699.7" cy="468.4" r="1.6"/><circle cx="699.8" cy="456.7" r="1.2"/><circle cx="706.4" cy="453.2" r="1.0"/><circle cx="702.1" cy="461.4" r="1.0"/><circle cx="702.9" cy="445.6" r="1.6"/><circle cx="706.0" cy="462.9" r="1.2"/><circle cx="697.4" cy="444.2" r="1.2"/><circle cx="702.0" cy="469.9" r="1.2"/><circle cx="704.7" cy="460.7" r="1.2"/><circle cx="705.7" cy="468.6" r="1.2"/><circle cx="697.0" cy="467.0" r="1.0"/><circle cx="703.1" cy="451.9" r="1.2"/><circle cx="712.8" cy="477.3" r="1.0"/><circle cx="715.3" cy="477.2" r="1.4"/><circle cx="713.6" cy="477.6" r="1.6"/><circle cx="714.8" cy="475.4" r="1.4"/><circle cx="710.7" cy="476.3" r="1.4"/><circle cx="716.1" cy="475.5" r="1.6"/><circle cx="722.2" cy="475.8" r="1.4"/><circle cx="715.1" cy="471.9" r="1.6"/><circle cx="707.9" cy="474.7" r="1.0"/><circle cx="719.6" cy="476.9" r="1.6"/><circle cx="714.0" cy="474.1" r="1.6"/><circle cx="713.1" cy="472.1" r="1.6"/><circle cx="712.4" cy="474.6" r="1.0"/><circle cx="718.9" cy="478.5" r="1.6"/><circle cx="726.0" cy="475.2" r="1.6"/><circle cx="722.4" cy="478.4" r="1.0"/><circle cx="687.2" cy="484.9" r="1.2"/><circle cx="676.3" cy="510.0" r="1.4"/><circle cx="685.4" cy="512.1" r="1.0"/><circle cx="684.6" cy="513.0" r="1.6"/><circle cx="664.5" cy="498.2" r="1.2"/><circle cx="664.5" cy="490.3" r="1.0"/><circle cx="691.9" cy="506.2" r="1.0"/><circle cx="668.3" cy="510.7" r="1.6"/><circle cx="689.8" cy="515.4" r="1.2"/><circle cx="685.0" cy="502.5" r="1.2"/><circle cx="696.0" cy="507.4" r="1.4"/><circle cx="687.2" cy="511.8" r="1.4"/><circle cx="670.4" cy="501.2" r="1.4"/><circle cx="681.1" cy="508.6" r="1.4"/><circle cx="678.6" cy="511.7" r="1.6"/><circle cx="671.0" cy="501.4" r="1.4"/><circle cx="682.3" cy="502.1" r="1.2"/><circle cx="687.5" cy="516.2" r="1.0"/><circle cx="683.7" cy="484.8" r="1.6"/><circle cx="672.7" cy="507.3" r="1.4"/><circle cx="673.5" cy="515.7" r="1.6"/><circle cx="667.8" cy="510.4" r="1.4"/><circle cx="690.4" cy="509.6" r="1.0"/><circle cx="697.6" cy="510.2" r="1.4"/><circle cx="681.6" cy="511.2" r="1.0"/><circle cx="687.5" cy="496.3" r="1.6"/><circle cx="671.2" cy="515.4" r="1.4"/><circle cx="663.9" cy="503.3" r="1.4"/><circle cx="684.0" cy="502.5" r="1.4"/><circle cx="679.9" cy="501.8" r="1.0"/><circle cx="672.0" cy="490.9" r="1.2"/><circle cx="674.7" cy="480.0" r="1.0"/><circle cx="688.8" cy="498.2" r="1.4"/><circle cx="699.2" cy="505.7" r="1.4"/><circle cx="673.7" cy="481.7" r="1.0"/><circle cx="668.1" cy="498.3" r="1.4"/><circle cx="667.9" cy="488.2" r="1.6"/><circle cx="676.1" cy="505.7" r="1.4"/><circle cx="669.6" cy="488.2" r="1.2"/><circle cx="683.6" cy="480.9" r="1.0"/><circle cx="679.5" cy="495.7" r="1.0"/><circle cx="689.5" cy="505.7" r="1.4"/><circle cx="678.2" cy="478.0" r="1.4"/><circle cx="668.9" cy="501.7" r="1.6"/><circle cx="673.2" cy="497.2" r="1.2"/><circle cx="679.7" cy="488.9" r="1.6"/><circle cx="689.8" cy="502.8" r="1.0"/><circle cx="677.4" cy="503.1" r="1.2"/><circle cx="691.0" cy="500.0" r="1.0"/><circle cx="685.9" cy="480.6" r="1.4"/><circle cx="679.9" cy="521.3" r="1.4"/><circle cx="689.6" cy="485.8" r="1.4"/><circle cx="681.2" cy="521.8" r="1.6"/><circle cx="690.7" cy="500.4" r="1.6"/><circle cx="682.7" cy="508.8" r="1.0"/><circle cx="697.3" cy="501.6" r="1.0"/><circle cx="696.3" cy="493.0" r="1.2"/><circle cx="677.7" cy="511.4" r="1.0"/><circle cx="670.5" cy="512.7" r="1.2"/><circle cx="688.2" cy="510.8" r="1.2"/><circle cx="679.6" cy="511.7" r="1.6"/><circle cx="673.4" cy="485.6" r="1.4"/><circle cx="681.4" cy="494.9" r="1.0"/><circle cx="684.4" cy="496.4" r="1.6"/><circle cx="679.6" cy="520.1" r="1.0"/><circle cx="674.8" cy="489.5" r="1.6"/><circle cx="678.2" cy="507.4" r="1.6"/><circle cx="677.4" cy="499.6" r="1.6"/><circle cx="670.9" cy="504.6" r="1.0"/><circle cx="674.0" cy="506.8" r="1.0"/><circle cx="667.7" cy="491.2" r="1.4"/><circle cx="667.4" cy="508.4" r="1.4"/><circle cx="691.7" cy="506.7" r="1.6"/><circle cx="669.5" cy="500.9" r="1.4"/><circle cx="677.0" cy="510.6" r="1.2"/><circle cx="697.5" cy="496.1" r="1.0"/><circle cx="697.9" cy="504.5" r="1.2"/><circle cx="691.0" cy="483.9" r="1.2"/><circle cx="684.6" cy="503.9" r="1.4"/><circle cx="694.8" cy="491.5" r="1.6"/><circle cx="661.5" cy="506.4" r="1.2"/><circle cx="682.7" cy="521.0" r="1.6"/><circle cx="687.0" cy="506.4" r="1.0"/><circle cx="674.2" cy="507.8" r="1.2"/><circle cx="681.3" cy="515.1" r="1.4"/><circle cx="685.5" cy="491.2" r="1.6"/><circle cx="691.7" cy="497.1" r="1.0"/><circle cx="664.6" cy="500.5" r="1.2"/><circle cx="669.2" cy="483.6" r="1.0"/><circle cx="675.5" cy="512.6" r="1.2"/><circle cx="683.7" cy="482.2" r="1.2"/><circle cx="691.9" cy="498.7" r="1.0"/><circle cx="678.5" cy="517.5" r="1.0"/><circle cx="668.9" cy="501.2" r="1.0"/><circle cx="667.3" cy="483.2" r="1.4"/><circle cx="680.6" cy="523.6" r="1.0"/><circle cx="681.9" cy="479.6" r="1.6"/><circle cx="688.1" cy="520.9" r="1.2"/><circle cx="672.6" cy="488.6" r="1.0"/><circle cx="668.9" cy="488.0" r="1.0"/><circle cx="666.7" cy="491.5" r="1.4"/><circle cx="673.1" cy="487.7" r="1.2"/><circle cx="673.5" cy="491.4" r="1.2"/><circle cx="665.1" cy="490.8" r="1.4"/><circle cx="673.8" cy="486.7" r="1.0"/><circle cx="669.0" cy="479.9" r="1.4"/><circle cx="673.8" cy="485.4" r="1.4"/><circle cx="677.5" cy="483.7" r="1.6"/><circle cx="666.0" cy="489.3" r="1.0"/><circle cx="674.0" cy="483.4" r="1.0"/><circle cx="694.8" cy="510.1" r="1.0"/><circle cx="690.1" cy="521.9" r="1.0"/><circle cx="691.8" cy="523.4" r="1.2"/><circle cx="695.8" cy="515.3" r="1.0"/><circle cx="695.6" cy="511.4" r="1.4"/><circle cx="697.1" cy="519.6" r="1.0"/><circle cx="692.8" cy="520.6" r="1.4"/><circle cx="691.6" cy="509.7" r="1.0"/><circle cx="693.9" cy="512.5" r="1.6"/><circle cx="689.2" cy="512.7" r="1.2"/><circle cx="684.7" cy="521.3" r="1.4"/><circle cx="695.2" cy="512.3" r="1.2"/><circle cx="687.0" cy="517.2" r="1.2"/></g></g>
</svg>
<div class="tl" style="left:225px;top:34.500px;letter-spacing:6.900px">АНАЛІЗ</div>
<div class="tl" style="left:120px;top:72.500px;letter-spacing:7.050px">ЕФЕКТИВНОСТІ</div>
<div class="tl" style="left:42.500px;top:110.800px;letter-spacing:7.300px">РЕКЛАМИ В ОНЛАЙН-</div>
<div class="tl" style="left:150px;top:148.500px;letter-spacing:7.450px">СЕРЕДОВИЩІ</div>
<div class="st" style="left:134.800px;top:283px;letter-spacing:.02px">Виконали студентка групи ФЕУ-412</div>
<div class="st" style="left:107.600px;top:308px;letter-spacing:.14px">Величко Вероніка та Зеркаль Анастасія</div>
</div>
<!-- page 2 -->
<div style="left:121px;top:602px;width:607px;height:60px;background:#fff;box-shadow:0 0 2px rgba(0,0,0,.3)"></div>
<!--/SLIDE-->
</div></div>

<!-- TILES -->
<svg style="left:0;top:0;width:0;height:0"><defs><filter id="avb" x="-10%" y="-10%" width="120%" height="120%"><feGaussianBlur stdDeviation="1.1"/></filter></defs></svg>
<div class="tile" style="left:895px;top:220px"><div style="left:0;top:0;width:144px;height:120px;border-radius:8px;border:4px solid #669df6"></div><div style="left:44px;top:32px;width:56px;height:56px;border-radius:50%;border:3px solid #54585c"></div><div class="mic" style="background:#1a73e8"><div style="left:4.400px;top:9.500px;width:3.400px;height:7px;border-radius:2px;background:#fff"></div><div style="left:11.300px;top:7.500px;width:3.400px;height:11px;border-radius:2px;background:#fff"></div><div style="left:18.200px;top:9.500px;width:3.400px;height:7px;border-radius:2px;background:#fff"></div></div><svg class="av" viewBox="0 0 44 44" ><g filter="url(#avb)"><rect width="44" height="44" fill="#d4d8dc"/><rect x="0" y="0" width="44" height="12" fill="#a9b8c6"/>
<ellipse cx="21" cy="25" rx="19.500" ry="23" fill="#3a2920"/><ellipse cx="23" cy="28" rx="10.500" ry="14" fill="#dc9a7a"/>
<path d="M7 28C8 10 20 4 28 8c6 3 9 10 8 21-2-8-5-12-9-15-6 2-11 6-13 16z" fill="#34231b"/>
<ellipse cx="18.500" cy="24.500" rx="2.200" ry="1.100" fill="#3a261e"/><ellipse cx="27.500" cy="24.500" rx="2.200" ry="1.100" fill="#3a261e"/>
<ellipse cx="23" cy="27" rx="9" ry="4" fill="#e6a88a" opacity=".6"/>
<ellipse cx="23" cy="34" rx="4.500" ry="1.800" fill="#f4ebe6"/><path d="M18 33c3 1 7 1 10 0" stroke="#a8584c" stroke-width="1" fill="none"/><rect x="15" y="41" width="12" height="3" fill="#ececec"/></g></svg><div class="nm">Елена Борисе...</div></div>
<div class="tile" style="left:1051px;top:220px"><svg class="av" viewBox="0 0 44 44" ><g filter="url(#avb)"><rect width="44" height="44" fill="#0b0a0c"/><path d="M8 32C5 16 10 5 18 5c7 0 11 7 10 17-1 7-2 10-5 14H9z" fill="#6e553a"/>
<path d="M10 28C9 16 12 8 18 8c5 0 8 6 7 14-1 5-2 8-4 10z" fill="#8a6a48"/>
<ellipse cx="18" cy="19.500" rx="6.200" ry="9.200" fill="#d49c86"/><path d="M3.500 23c0-5 2.500-8 4.500-8l1.500 3-2.500 10z" fill="#b98a74"/>
<ellipse cx="15.500" cy="17.500" rx="1.300" ry=".7" fill="#4a3428"/><ellipse cx="20.800" cy="17.500" rx="1.300" ry=".7" fill="#4a3428"/>
<path d="M12 30h11l6 14H6z" fill="#b58c74"/><path d="M6 36l10 4 11-5 10 9H0z" fill="#121016"/><ellipse cx="18" cy="24.500" rx="2.300" ry="1.100" fill="#b04a48"/></g></svg><div class="nm">Ника Величко</div></div>
<div class="tile" style="left:1207px;top:220px"><svg class="av" viewBox="0 0 44 44" ><g filter="url(#avb)"><rect width="44" height="44" fill="#3b403e"/><rect x="12" y="0" width="28" height="16" fill="#6f7873"/><path d="M12 4h28M12 8h28M12 12h28M18 0v16M24 0v16M30 0v16M36 0v16" stroke="#4a524e" stroke-width="1.200"/><rect x="0" y="8" width="9" height="30" fill="#2a2523"/>
<path d="M12 30C10 14 16 7 24 7s14 7 12 23c-3 2-6 2-8 1H20c-2 1-5 1-8-1z" fill="#2b1d19"/><ellipse cx="24" cy="19.500" rx="6" ry="7.500" fill="#dba890"/>
<path d="M16 16c2-6 13-7 16-1-4-1-10-1-16 1z" fill="#2b1d19"/><path d="M21 22.500c2 1.200 4 1.200 6 0" stroke="#a8584c" stroke-width=".9" fill="none"/>
<path d="M5 44c1-10 8-13 19-13s18 3 19 13z" fill="#8d979d"/><path d="M20 29l4 5 4-5z" fill="#e8ecef"/></g></svg><div class="nm">Наталія Леоні...</div></div>
<div class="tile" style="left:895px;top:352px"><div class="mic"><svg style="left:4.500px;top:4.500px;width:17px;height:17px" viewBox="0 0 24 24"><path d="M19 11h-1.700c0 .74-.16 1.430-.43 2.050l1.230 1.230c.56-.98.9-2.090.9-3.280zm-4.020.17c0-.6.020-.11.020-.17V5c0-1.660-1.340-3-3-3S9 3.340 9 5v.18l5.980 5.990zM4.270 3L3 4.270l6.010 6.010V11c0 1.660 1.330 3 2.990 3 .22 0 .44-.3.650-.08l1.660 1.660c-.71.330-1.500.520-2.310.520-2.760 0-5.300-2.100-5.300-5.100H5c0 3.410 2.720 6.230 6 6.720V21h2v-3.280c.91-.13 1.770-.45 2.540-.9L19.730 21 21 19.730 4.270 3z" fill="#fff" stroke="#fff" stroke-width=".4"/></svg></div><svg class="av" viewBox="0 0 44 44" ><g filter="url(#avb)"><rect width="44" height="44" fill="#c4941f"/><rect y="0" width="44" height="16" fill="#7d6a3a"/><path d="M0 10h44v4H0z" fill="#b9a98a"/>
<path d="M0 30L18 22h10l16 10v12H0z" fill="#d9a51d"/><path d="M18 6h12v20H18z" fill="#2a2018"/><path d="M0 16l16 4v6L0 32z" fill="#8f6a2a"/>
<path d="M22 12c2 0 3 2 3 5v8l-1 8h-1.500l-.5-7-.5 7H20l-1-8v-8c0-3 1-5 3-5z" fill="#1c1712"/><path d="M4 14h4v4H4z" fill="#b33"/></g></svg><div class="nm">Олександр Гр...</div></div>
<div class="tile" style="left:1051px;top:352px"><div class="mic"><svg style="left:4.500px;top:4.500px;width:17px;height:17px" viewBox="0 0 24 24"><path d="M19 11h-1.700c0 .74-.16 1.430-.43 2.050l1.230 1.230c.56-.98.9-2.090.9-3.280zm-4.020.17c0-.6.020-.11.020-.17V5c0-1.660-1.340-3-3-3S9 3.340 9 5v.18l5.980 5.990zM4.270 3L3 4.270l6.010 6.010V11c0 1.660 1.330 3 2.990 3 .22 0 .44-.3.650-.08l1.660 1.660c-.71.330-1.500.520-2.310.520-2.760 0-5.300-2.100-5.300-5.100H5c0 3.410 2.720 6.230 6 6.720V21h2v-3.280c.91-.13 1.770-.45 2.540-.9L19.730 21 21 19.730 4.270 3z" fill="#fff" stroke="#fff" stroke-width=".4"/></svg></div><svg class="av" viewBox="0 0 44 44" ><g filter="url(#avb)"><rect width="44" height="44" fill="#e9dcd6"/><path d="M0 0h20c4 4 2 8-4 10-8 3-14 6-16 12z" fill="#3a2a26"/>
<path d="M2 18c8-6 20-8 30-2-8 0-16 3-22 8z" fill="#4a3630"/><ellipse cx="26" cy="26" rx="12" ry="9" fill="#efc9bd" transform="rotate(20 26 26)"/>
<ellipse cx="8" cy="22" rx="7" ry="6" fill="#e8c0b0"/><path d="M0 30l12 6 30-6v14H0z" fill="#8a8a86"/><path d="M2 34l10 10H0z" fill="#3a2a26"/><path d="M22 0h22v14c-6-4-14-6-22-8z" fill="#f2ece8"/></g></svg><div class="nm">Олександра Т...</div></div>
<div class="tile" style="left:1207px;top:352px"><div class="mic"><svg style="left:4.500px;top:4.500px;width:17px;height:17px" viewBox="0 0 24 24"><path d="M19 11h-1.700c0 .74-.16 1.430-.43 2.050l1.230 1.230c.56-.98.9-2.090.9-3.280zm-4.020.17c0-.6.020-.11.020-.17V5c0-1.660-1.340-3-3-3S9 3.340 9 5v.18l5.980 5.990zM4.270 3L3 4.270l6.010 6.010V11c0 1.660 1.330 3 2.990 3 .22 0 .44-.3.650-.08l1.660 1.660c-.71.330-1.500.520-2.310.520-2.760 0-5.300-2.100-5.300-5.100H5c0 3.410 2.720 6.230 6 6.720V21h2v-3.280c.91-.13 1.770-.45 2.540-.9L19.730 21 21 19.730 4.270 3z" fill="#fff" stroke="#fff" stroke-width=".4"/></svg></div><div class="av" style="background:#0097a7;color:#fff;font-size:23px;line-height:44px;text-align:center">И</div><div class="nm">Ирина Качнова</div></div>
<div class="tile" style="left:895px;top:484px"><div class="mic"><svg style="left:4.500px;top:4.500px;width:17px;height:17px" viewBox="0 0 24 24"><path d="M19 11h-1.700c0 .74-.16 1.430-.43 2.050l1.230 1.230c.56-.98.9-2.090.9-3.280zm-4.020.17c0-.6.020-.11.020-.17V5c0-1.660-1.340-3-3-3S9 3.340 9 5v.18l5.980 5.990zM4.270 3L3 4.270l6.010 6.010V11c0 1.660 1.330 3 2.990 3 .22 0 .44-.3.650-.08l1.660 1.660c-.71.330-1.500.520-2.310.520-2.760 0-5.300-2.100-5.300-5.100H5c0 3.410 2.720 6.230 6 6.720V21h2v-3.280c.91-.13 1.770-.45 2.540-.9L19.730 21 21 19.730 4.270 3z" fill="#fff" stroke="#fff" stroke-width=".4"/></svg></div><svg class="av" viewBox="0 0 44 44" ><g filter="url(#avb)"><rect width="44" height="44" fill="#7f9a4f"/><rect width="44" height="20" y="6" fill="#dfe6ea"/><rect width="44" height="7" fill="#5f7d3a"/><rect y="22" width="44" height="6" fill="#6f8f45"/>
<path d="M12 30c0-10 4-16 12-16s10 6 10 16z" fill="#2a2d33"/><ellipse cx="24" cy="12" rx="4.500" ry="5.500" fill="#d9a98c"/><path d="M19.500 9c1-3 8-3 9 0z" fill="#6a5a48"/>
<path d="M6 30c4-6 14-9 24-7 6 1 10 4 12 7-4 4-10 6-18 6S10 34 6 30z" fill="#6f5a3a"/><path d="M10 36c2 2 6 8 4 8h20c0-4 2-6 4-8-8 3-20 3-28 0z" fill="#c9cdd3"/></g></svg><div class="nm">Максим Нечай</div></div>
<div class="tile" style="left:1051px;top:484px"><div style="left:46px;top:32px;width:28px;height:28px;border-radius:50%;background:#bb55d0;color:#fff;font-size:15px;line-height:29px;text-align:center">Н</div><svg style="left:73px;top:32px;width:30px;height:30px" viewBox="0 0 30 30"><defs><clipPath id="c2"><circle cx="15" cy="15" r="14"/></clipPath></defs><circle cx="15" cy="15" r="15" fill="#3c4043"/><g clip-path="url(#c2)"><rect width="30" height="30" fill="#14141c"/><path d="M0 8c4-2 8 2 8 8l-8 6z" fill="#2a3a8a"/><path d="M30 12c-3 0-5 4-5 8l5 2z" fill="#6a2a9a"/><ellipse cx="15" cy="12" rx="4.500" ry="5.500" fill="#c99478"/><path d="M10.500 9c1-4 8-4 9 0z" fill="#1a1410"/><path d="M4 30c0-7 5-11 11-11s11 4 11 11z" fill="#0f0f12"/><path d="M13 18l2 3 2-3z" fill="#c99478"/></g></svg><div class="nm" style="left:0;width:144px;text-align:center;top:69px;font-size:13.4px">Ещё 3 чел.</div></div>
<div class="tile" style="left:1207px;top:484px"><div class="mic"><svg style="left:4.500px;top:4.500px;width:17px;height:17px" viewBox="0 0 24 24"><path d="M19 11h-1.700c0 .74-.16 1.430-.43 2.050l1.230 1.230c.56-.98.9-2.090.9-3.280zm-4.020.17c0-.6.020-.11.020-.17V5c0-1.660-1.340-3-3-3S9 3.340 9 5v.18l5.980 5.990zM4.270 3L3 4.270l6.010 6.010V11c0 1.660 1.330 3 2.990 3 .22 0 .44-.3.650-.08l1.660 1.660c-.71.330-1.500.520-2.310.520-2.760 0-5.300-2.100-5.300-5.100H5c0 3.410 2.720 6.230 6 6.720V21h2v-3.280c.91-.13 1.770-.45 2.540-.9L19.730 21 21 19.730 4.270 3z" fill="#fff" stroke="#fff" stroke-width=".4"/></svg></div><div class="av" style="background:#7b1fa2;color:#fff;font-size:24px;line-height:45px;text-align:center">N</div><div class="nm"><span style="letter-spacing:-1.2px">Вы</span></div></div>

<!-- BOTTOM BAR -->
<div style="left:24px;top:678px;font-size:15px;font-weight:bold;color:#fff;line-height:20px;white-space:nowrap;letter-spacing:-.75px">15:18</div>
<div style="left:72px;top:680px;width:1px;height:16px;background:#dadce0"></div>
<div style="left:85px;top:678px;font-size:16px;font-weight:bold;color:#fff;line-height:20px;white-space:nowrap;letter-spacing:.08px">djv-ubsh-bxb</div>
<!-- mic -->
<div class="cb" style="left:473px;background:#7a2d27"></div>
<svg style="left:484px;top:679px;width:18px;height:18px;opacity:.45" viewBox="0 0 24 24"><path d="M19 11h-1.700c0 .74-.16 1.430-.43 2.050l1.230 1.230c.56-.98.9-2.090.9-3.280zm-4.020.17c0-.6.020-.11.020-.17V5c0-1.660-1.340-3-3-3S9 3.340 9 5v.18l5.980 5.990zM4.270 3L3 4.270l6.010 6.010V11c0 1.660 1.330 3 2.990 3 .22 0 .44-.3.650-.08l1.660 1.660c-.71.330-1.500.520-2.310.520-2.760 0-5.300-2.100-5.300-5.100H5c0 3.410 2.720 6.230 6 6.720V21h2v-3.280c.91-.13 1.770-.45 2.540-.9L19.730 21 21 19.730 4.270 3z" fill="#e8c4c0"/></svg>
<div style="left:498px;top:667px;width:20px;height:20px;border-radius:50%;background:#f5821f"></div>
<div style="left:507px;top:672px;width:2px;height:6.500px;background:#fff"></div><div style="left:507px;top:680px;width:2px;height:2px;background:#fff"></div>
<!-- cam -->
<div class="cb" style="left:525px;background:#7a2d27"></div>
<svg style="left:535px;top:679px;width:19px;height:19px;opacity:.45" viewBox="0 0 24 24"><path d="M9.560 8l-2-2-4.150-4.140L2 3.270 4.730 6H4c-.55 0-1 .45-1 1v10c0 .55.450 1 1 1h12c.210 0 .39-.8.550-.17L19.730 21l1.410-1.410-8.860-8.860L9.560 8zM5 16V8h1.730l8 8H5zm10-8v2.610l6 6V6.500l-4 4V7c0-.55-.45-1-1-1h-5.610l2 2H15z" fill="#e8c4c0"/></svg>
<div style="left:550px;top:667px;width:20px;height:20px;border-radius:50%;background:#f5821f"></div>
<div style="left:559px;top:672px;width:2px;height:6.500px;background:#fff"></div><div style="left:559px;top:680px;width:2px;height:2px;background:#fff"></div>
<!-- cc -->
<div class="cb" style="left:577px"></div>
<svg style="left:585px;top:676px;width:24px;height:24px" viewBox="0 0 24 24"><path d="M19 4H5c-1.110 0-2 .9-2 2v12c0 1.100.89 2 2 2h14c1.100 0 2-.9 2-2V6c0-1.100-.9-2-2-2zm0 14H5V6h14v12zM7 15h3c.55 0 1-.45 1-1v-1H9.500v.5h-2v-3h2v.5H11v-1c0-.55-.45-1-1-1H7c-.55 0-1 .45-1 1v4c0 .55.450 1 1 1zm7 0h3c.55 0 1-.45 1-1v-1h-1.500v.5h-2v-3h2v.5H18v-1c0-.55-.45-1-1-1h-3c-.55 0-1 .45-1 1v4c0 .55.450 1 1 1z" fill="#fff" stroke="#fff" stroke-width=".55" stroke-linejoin="round"/></svg>
<!-- emoji -->
<div class="cb" style="left:629px"></div>
<svg style="left:637px;top:676px;width:24px;height:24px" viewBox="0 0 24 24"><path d="M11.990 2C6.470 2 2 6.480 2 12s4.470 10 9.990 10C17.520 22 22 17.520 22 12S17.520 2 11.990 2zM12 20c-4.420 0-8-3.580-8-8s3.580-8 8-8 8 3.580 8 8-3.580 8-8 8zm3.500-9c.83 0 1.500-.67 1.500-1.500S16.330 8 15.500 8 14 8.670 14 9.500s.67 1.500 1.500 1.500zm-7 0c.83 0 1.500-.67 1.500-1.500S9.330 8 8.500 8 7 8.670 7 9.500 7.670 11 8.500 11zm3.500 6.500c2.330 0 4.310-1.460 5.110-3.500H6.890c.8 2.040 2.780 3.500 5.110 3.500z" fill="#fff" stroke="#fff" stroke-width=".55" stroke-linejoin="round"/></svg>
<!-- present -->
<div class="cb" style="left:681px"></div>
<svg style="left:689px;top:676px;width:24px;height:24px" viewBox="0 0 24 24"><path d="M21 3H3c-1.110 0-2 .89-2 2v14c0 1.110.89 2 2 2h18c1.110 0 2-.89 2-2V5c0-1.110-.89-2-2-2zm0 16.020H3V4.980h18v14.040zM10 12H8l4-4 4 4h-2v4h-4v-4z" fill="#fff" stroke="#fff" stroke-width=".55" stroke-linejoin="round"/></svg>
<!-- hand -->
<div class="cb" style="left:733px"></div>
<svg style="left:741px;top:675px;width:26.500px;height:27px" viewBox="0 0 24 26" preserveAspectRatio="none"><path d="M7.500 14V6.200a1.250 1.250 0 0 1 2.500 0V3.700a1.250 1.250 0 0 1 2.500 0V3.200a1.250 1.250 0 0 1 2.500 0v1.500a1.250 1.250 0 0 1 2.500 0V16c0 4-2.600 7-6.500 7-3 0-4.800-1.500-6-4L2.400 13.800c-.4-.9.600-1.700 1.500-1.200L7.500 15" stroke="#fff" stroke-width="1.900" fill="none" stroke-linejoin="round"/><path d="M10 5v7M12.500 3.500V12M15 4.500V12" stroke="#fff" stroke-width="1.900"/></svg>
<!-- more -->
<div class="cb" style="left:785px"></div>
<svg style="left:793px;top:676px;width:24px;height:24px" viewBox="0 0 24 24"><circle cx="12" cy="5.500" r="2" fill="#fff"/><circle cx="12" cy="12" r="2" fill="#fff"/><circle cx="12" cy="18.500" r="2" fill="#fff"/></svg>
<!-- hangup -->
<div style="left:837px;top:668px;width:56px;height:40px;border-radius:20px;background:#ea4335"></div>
<svg style="left:853px;top:676px;width:24px;height:24px" viewBox="0 0 24 24"><path d="M12 9c-1.600 0-3.150.25-4.600.72v3.100c0 .39-.23.74-.56.9-.98.49-1.870 1.120-2.660 1.850-.18.18-.43.28-.7.28-.28 0-.53-.11-.71-.29L.29 13.080c-.18-.17-.29-.42-.29-.7 0-.28.11-.53.29-.71C3.340 8.780 7.460 7 12 7s8.660 1.780 11.710 4.670c.18.18.29.43.29.71 0 .28-.11.53-.29.71l-2.480 2.480c-.18.18-.43.29-.71.29-.27 0-.52-.11-.7-.28-.79-.74-1.690-1.360-2.670-1.850-.33-.16-.56-.5-.56-.9v-3.100C15.150 9.250 13.600 9 12 9z" fill="#fff"/></svg>
<!-- right icons -->
<svg style="left:1126px;top:676px;width:24px;height:24px" viewBox="0 0 24 24"><path d="M11 7h2v2h-2zm0 4h2v6h-2zm1-9C6.480 2 2 6.480 2 12s4.480 10 10 10 10-4.480 10-10S17.520 2 12 2zm0 18c-4.410 0-8-3.590-8-8s3.590-8 8-8 8 3.590 8 8-3.590 8-8 8z" fill="#fff" stroke="#fff" stroke-width=".55" stroke-linejoin="round"/></svg>
<svg style="left:1173px;top:675px;width:26px;height:26px" viewBox="0 0 24 24"><path d="M9 13.750c-2.340 0-7 1.170-7 3.500V19h14v-1.750c0-2.330-4.660-3.500-7-3.500zM4.340 17c.84-.58 2.870-1.250 4.660-1.250s3.820.67 4.660 1.250H4.340zM9 12c1.930 0 3.500-1.570 3.500-3.500S10.930 5 9 5 5.500 6.570 5.500 8.500 7.070 12 9 12zm0-5c.83 0 1.500.67 1.500 1.500S9.830 10 9 10s-1.500-.67-1.500-1.500S8.170 7 9 7zm7.040 6.810c1.160.84 1.960 1.960 1.960 3.440V19h4v-1.750c0-2.020-3.500-3.170-5.960-3.440zM15 12c1.930 0 3.500-1.570 3.500-3.500S16.930 5 15 5c-.54 0-1.040.13-1.500.35.63.89 1 1.980 1 3.150s-.37 2.260-1 3.150c.46.22.96.35 1.500.35z" fill="#fff" stroke="#fff" stroke-width=".55" stroke-linejoin="round"/></svg>
<div style="left:1187px;top:656px;width:26px;height:19px;border-radius:9.500px;background:#5f6368;color:#fff;font-size:11px;font-weight:bold;line-height:19px;text-align:center">12</div>
<svg style="left:1222px;top:676px;width:24px;height:24px" viewBox="0 0 24 24"><path d="M4 4h16v12H5.170L4 17.170V4m0-2c-1.100 0-1.990.9-1.990 2L2 22l4-4h14c1.100 0 2-.9 2-2V4c0-1.100-.9-2-2-2H4zm2 10h8v2H6v-2zm0-3h12v2H6V9zm0-3h12v2H6V6z" fill="#fff" stroke="#fff" stroke-width=".55" stroke-linejoin="round"/></svg>
<svg style="left:1270px;top:676px;width:24px;height:24px" viewBox="0 0 24 24"><path d="M12 2l-5.500 9h11L12 2zm0 3.840L13.930 9h-3.870L12 5.840zM17.500 13c-2.490 0-4.500 2.010-4.500 4.500s2.010 4.500 4.500 4.500 4.500-2.010 4.500-4.500-2.010-4.500-4.500-4.500zm0 7c-1.380 0-2.500-1.120-2.500-2.500s1.120-2.500 2.500-2.500 2.500 1.120 2.500 2.500-1.120 2.500-2.500 2.500zM3 21.500h8v-8H3v8zm2-6h4v4H5v-4z" fill="#fff" stroke="#fff" stroke-width=".55" stroke-linejoin="round"/></svg>
<svg style="left:1319px;top:675px;width:24px;height:24px" viewBox="0 0 24 24"><path d="M6.500 10V7.500a4.500 4.500 0 0 1 9 0V10" stroke="#fff" stroke-width="2" fill="none"/><path d="M17.500 10H4.500v12h8.500" stroke="#fff" stroke-width="2" fill="none" stroke-linejoin="round"/><circle cx="18.500" cy="19" r="4.500" fill="#fff"/><circle cx="18.500" cy="17.600" r="1.400" fill="#202124"/><path d="M15.800 21.200c.6-1.100 1.600-1.600 2.700-1.600s2.100.5 2.700 1.600c-.7.900-1.700 1.400-2.700 1.400s-2-.5-2.700-1.400z" fill="#202124"/></svg>

<!-- TASKBAR -->
<div id="taskbar" style="background:linear-gradient(180deg,#15100f 0,#15100f 1px,#6f6b6b 1px,#4a4545 2px,#2a1f1e 3px,#1c1313 100%)"></div>
<div style="left:300px;top:730px;width:900px;height:38px;background:radial-gradient(ellipse at 55% 50%,rgba(58,30,30,.55),rgba(40,25,25,0) 70%)"></div>
<div style="left:772px;top:739px;width:64px;height:6px;border-radius:3px;background:rgba(120,100,92,.55);filter:blur(2px)"></div>
<div style="left:795px;top:753px;width:22px;height:4px;border-radius:2px;background:rgba(100,80,76,.5);filter:blur(1.500px)"></div>
<div style="left:772px;top:764px;width:64px;height:6px;border-radius:3px;background:rgba(100,75,70,.5);filter:blur(2px)"></div>
<!-- start orb -->
<svg style="left:7px;top:729px;width:40px;height:39px" viewBox="-1 -.5 40 39">
<defs>
<linearGradient id="ob" x1="0" y1="0" x2="0" y2="1"><stop offset="0" stop-color="#bfd0de"/><stop offset=".42" stop-color="#84a6c4"/><stop offset=".5" stop-color="#1f67a8"/><stop offset=".72" stop-color="#1579c4"/><stop offset="1" stop-color="#1cc4f0"/></linearGradient>
<radialGradient id="ob2" cx=".5" cy="1" r=".55"><stop offset="0" stop-color="#3fe0ff" stop-opacity=".9"/><stop offset="1" stop-color="#1cc4f0" stop-opacity="0"/></radialGradient>
<filter id="obf"><feGaussianBlur stdDeviation=".5"/></filter>
</defs>
<circle cx="19" cy="19" r="19" fill="#0b2236"/>
<circle cx="19" cy="19" r="18.300" fill="url(#ob)"/><circle cx="19" cy="19" r="18.300" fill="url(#ob2)"/>
<circle cx="19" cy="19" r="18" fill="none" stroke="#cfe6f2" stroke-opacity=".65" stroke-width=".9"/>
<path d="M1.500 18.500C8 16 14 16.500 19 19s11 3 17.500 .500" stroke="#134f86" stroke-width="1.200" fill="none" opacity=".6"/>
<g filter="url(#obf)">
<path d="M10 8.500C13 7 16.500 7 19.700 8.200L18.500 16.500C15.500 15.300 12.500 15.500 9 17z" fill="#e8581f"/><path d="M10.500 9C13 8 16 8 18.500 9L18 12C15 11 13 11 10 12z" fill="#f79a3a" opacity=".7"/>
<path d="M21.500 9.500C24.500 11 27.500 11 31 9.800L29.800 18.300C26.500 19.600 23.500 19.500 20.500 18z" fill="#6db33a"/><path d="M22 10.500C25 12 28 12 30.500 11L30 14C27 15 24 15 21.500 13.500z" fill="#a6d85a" opacity=".6"/>
<path d="M8.800 19C12 17.600 15 17.600 18.200 18.800L17 27C14 25.800 11 26 7.600 27.500z" fill="#2f8fd8"/><path d="M9.500 19.500C12 18.500 15 18.500 17.500 19.500L17 22.500C14.500 21.500 12 21.500 9 22.800z" fill="#7cc4f4" opacity=".6"/>
<path d="M20 20C23 21.500 26 21.500 29.500 20.300L28.200 28.500C25 29.800 22 29.700 18.800 28.200z" fill="#f5b721"/><path d="M20.500 21C23 22.300 26 22.300 29 21.300L28.500 24.500C25.500 25.500 23 25.500 20 24z" fill="#ffe07a" opacity=".6"/>
</g>
</svg>
<!-- word button -->
<div style="left:60px;top:729px;width:158px;height:38px;border-radius:3px;border:1px solid #6e6a6a;background:linear-gradient(180deg,#4a4646 0,#3a3636 48%,#2a2626 52%,#2e2a2a 100%)"></div>
<svg style="left:70px;top:733px;width:30px;height:32px" viewBox="0 0 30 32"><path d="M7 1h15l6 6v24H7z" fill="#f4f8fd" stroke="#9ab3d6" stroke-width="1"/><path d="M22 1v6h6" fill="#d6e3f3" stroke="#9ab3d6" stroke-width="1"/><path d="M17 9h8M17 12h8M10 17h15M10 20h15M10 23h15M10 26h11" stroke="#9ab3d6" stroke-width="1.200"/><rect x="1" y="3" width="14" height="12" fill="#2a5db0" stroke="#c9d9f0" stroke-width="1"/><path d="M3.500 6l1.800 7 2.200-5.500 2.200 5.500 2.300-7.500" stroke="#fff" stroke-width="1.600" fill="none"/></svg>
<div style="left:105px;top:740px;font-size:12.200px;line-height:16px;color:#fff;white-space:nowrap">Документ1 - Micr...</div>
<!-- opera -->
<svg style="left:236px;top:731px;width:28px;height:34px" viewBox="0 0 28 34"><ellipse cx="14" cy="17" rx="13.500" ry="16" fill="#d81c1c"/><ellipse cx="14" cy="17" rx="13.500" ry="16" fill="url(#og)"/><defs><linearGradient id="og" x1="0" y1="0" x2="0" y2="1"><stop offset="0" stop-color="#ff5a4a" stop-opacity=".7"/><stop offset=".5" stop-color="#d81c1c" stop-opacity="0"/><stop offset="1" stop-color="#8a0a0a" stop-opacity=".6"/></linearGradient></defs><ellipse cx="14" cy="17" rx="5.200" ry="11.500" fill="#1c1313"/></svg>
<!-- chrome button -->
<div style="left:284px;top:729px;width:158px;height:38px;border-radius:3px;border:1px solid #8a8686;background:linear-gradient(180deg,#5a5656 0,#454141 48%,#322e2e 52%,#383434 100%)"></div>
<svg style="left:293px;top:732px;width:31px;height:31px" viewBox="0 0 32 32"><circle cx="16" cy="16" r="15" fill="#db4437"/><path d="M16 16L3 8.500A15 15 0 0 0 9.800 29.700z" fill="#0f9d58"/><path d="M16 16l-6.200 13.700A15 15 0 0 0 30.500 12H16z" fill="#ffcd40"/><path d="M3 8.500A15 15 0 0 1 30.500 12H16z" fill="#db4437"/><circle cx="16" cy="16" r="7" fill="#f1f1f1"/><circle cx="16" cy="16" r="5.500" fill="#4285f4"/></svg>
<div style="left:309px;top:749px;width:15px;height:15px;border-radius:50%;background:#7b1fa2;color:#fff;font-size:9px;line-height:15px;text-align:center;border:0">N</div>
<div style="left:329px;top:740px;font-size:12.500px;line-height:16px;color:#fff;white-space:nowrap">Meet – djv-ubsh-...</div>
<!-- explorer -->
<svg style="left:459px;top:734px;width:32px;height:30px" viewBox="0 0 32 30"><path d="M1 4h10l2 2h8v20H1z" fill="#e9c96a"/><path d="M8 7h10l2 2h11v18H8z" fill="#f4dc8a" stroke="#c9a84a" stroke-width=".6"/><rect x="3" y="2" width="4" height="2.500" fill="#3a9a3a"/><rect x="12" y="4" width="4" height="2.500" fill="#c0392b"/><rect x="20" y="6" width="4" height="2.500" fill="#2a7fd0"/><path d="M5 18h22v11h-4v-6H9v6H5z" fill="#5aa7e0" stroke="#2a6fb0" stroke-width=".6"/><path d="M7 20h18v2H7z" fill="#a8d4f5"/></svg>
<!-- tray -->
<div style="left:1176px;top:738px;font-size:12px;line-height:16px;color:#dedede;white-space:nowrap">RU</div>
<svg style="left:1207px;top:746px;width:9px;height:6px" viewBox="0 0 9 6"><path d="M0 5.500L4.500 0 9 5.500z" fill="#f0f0f0"/></svg>
<svg style="left:1228px;top:744px;width:15px;height:10px" viewBox="0 0 15 10"><rect x="0" y="7" width="2" height="3" fill="#fff"/><rect x="3" y="5" width="2" height="5" fill="#fff"/><rect x="6" y="3" width="2" height="7" fill="#fff"/><rect x="9" y="1.500" width="2" height="8.500" fill="#fff"/><rect x="12.500" y="0" width="1.500" height="10" fill="#777"/></svg>
<svg style="left:1252px;top:741px;width:16px;height:16px" viewBox="0 0 16 16"><circle cx="7" cy="8" r="6.500" fill="#3a7fd0"/><path d="M3 4c2-1 4 0 3.500 2S4 8.500 3 11c-1.500-2-1.500-5 0-7zM8 9c2-1 4 0 4 2s-2 3-4 3c-1-1.500-1-3.500 0-5zM8 2c2 0 4 1 5 3-1.500 1-3 .5-4-.5z" fill="#5fce3a"/><circle cx="11.500" cy="12" r="3.800" fill="#111"/><path d="M10 10.500l3 3M13 10.500l-3 3" stroke="#fff" stroke-width="1.100"/></svg>
<div style="left:1286px;top:733px;width:54px;text-align:center;font-size:12px;line-height:16px;color:#fff;white-space:nowrap;letter-spacing:-.2px">15:18</div>
<div style="left:1282px;top:750px;width:62px;text-align:center;font-size:12px;line-height:16px;color:#fff;white-space:nowrap;letter-spacing:-.35px">25.04.2023</div>
<div style="left:1351px;top:729px;width:15px;height:39px;border:1px solid #7a7676;border-right:0;background:linear-gradient(90deg,#4a4545,#2a2424)"></div>

</div></body></html>
